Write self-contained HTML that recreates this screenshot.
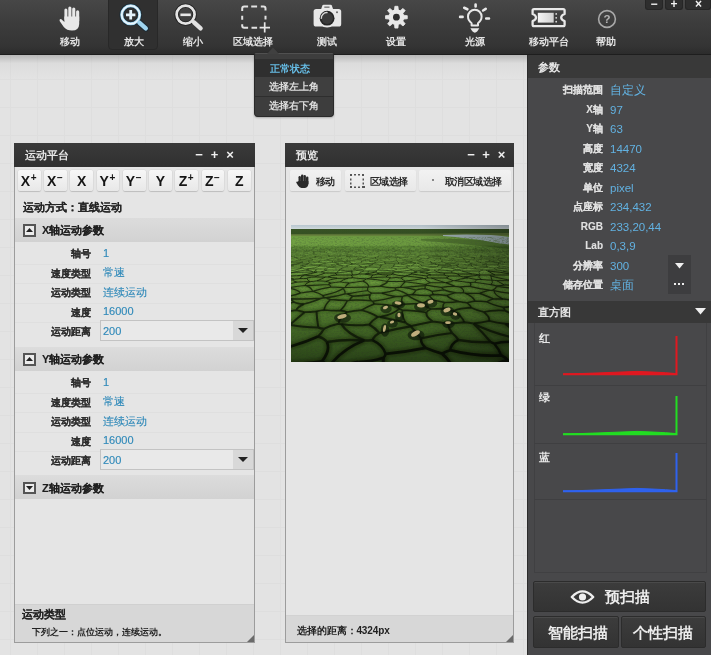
<!DOCTYPE html>
<html><head><meta charset="utf-8">
<style>
*{margin:0;padding:0;box-sizing:border-box}
html,body{width:711px;height:655px;overflow:hidden;background:#e2e2e2}
body{position:relative;font-family:"Liberation Sans",sans-serif;will-change:transform}
.a{position:absolute}
#bg{left:0;top:55px;width:528px;height:600px;background-color:#e3e3e3;
background-image:linear-gradient(#dedede 1px,transparent 1px),linear-gradient(90deg,#dedede 1px,transparent 1px);
background-size:27px 28px;background-position:10px 24px}
#bgshade{left:0;top:55px;width:528px;height:24px;background:linear-gradient(rgba(150,150,150,.55),rgba(200,200,200,.25) 35%,rgba(226,226,226,0))}
#tb{left:0;top:0;width:711px;height:55px;background:linear-gradient(#474747,#3d3d3d 40%,#343434 85%,#2c2c2c);border-bottom:1px solid #1e1e1e}
.lbl{position:absolute;top:35.6px;font-size:10px;line-height:12px;color:#e4e4e4;font-weight:bold;white-space:nowrap;transform:translateX(-50%)}
#act{left:108px;top:-1px;width:50px;height:51px;background:#303030;border:1px solid #282828;border-radius:0 0 4px 4px}
#wc{left:644px;top:0;width:67px;height:10px}
.wcb{position:absolute;top:0;height:10px;background:#2e2e2e;border:1px solid #262626;border-top:none;border-radius:0 0 3px 3px;color:#f2f2f2;font-size:12px;line-height:8px;text-align:center;font-weight:bold}
.mi{font-size:10px;line-height:12px;color:#dedede;white-space:nowrap;font-weight:bold}

#lp .ph,#pp .ph{font-size:11px;line-height:13px;color:#e6e6e6;white-space:nowrap;font-weight:bold}
.pc{font-size:13px;line-height:14px;color:#f0f0f0;font-weight:bold;width:12px;text-align:center}
.mb{position:absolute;top:27px;width:22.8px;height:21px;background:linear-gradient(#f7f7f7,#e8e8e8);border-radius:2px;box-shadow:0 1px 1px rgba(0,0,0,.15),0 0 0 0.5px rgba(0,0,0,.06);font-size:14px;font-weight:bold;line-height:22px;color:#161616;text-align:center}
.mb sup{font-size:10px;line-height:0;vertical-align:5.5px;margin-left:0.5px}
.tx{font-size:11px;line-height:13px;color:#252525;white-space:nowrap;font-weight:bold;-webkit-text-stroke:0.1px #252525}
.sh{left:0;width:239px;height:24px;background:linear-gradient(#dcdcdc,#d2d2d2)}
.sh .tg{position:absolute;left:7.5px;top:6.5px;width:13.5px;height:12.5px;border:2px solid #555;background:#ececec;display:flex;align-items:center;justify-content:center}
.sh span{position:absolute;left:27px;top:5.5px;font-size:11px;line-height:14px;color:#1e1e1e;white-space:nowrap;font-weight:bold;-webkit-text-stroke:0.1px #1e1e1e}
.rl{position:absolute;right:163px;font-size:10px;line-height:12px;color:#2e2e2e;white-space:nowrap;font-weight:bold;-webkit-text-stroke:0.15px #2e2e2e}
.rv{position:absolute;left:88px;font-size:11px;line-height:14px;color:#2f89b9;white-space:nowrap;margin-top:-1.5px;-webkit-text-stroke:0.15px #2f89b9}
.sep{position:absolute;left:0;width:239px;height:1px;background:#dfdfdf}
.inp{position:absolute;left:85px;width:154px;height:21px;margin-top:-1px;background:#e9e9e9;border:1px solid #c3c3c3}
.inp span{position:absolute;left:2px;top:2.5px;font-size:11px;line-height:14px;color:#2f89b9;-webkit-text-stroke:0.15px #2f89b9}
.inp .dd{position:absolute;right:0;top:0;width:20px;height:19px;background:#d8d8d8;display:flex;align-items:center;justify-content:center}

#pp .ph{font-size:11px;line-height:13px;color:#e6e6e6;white-space:nowrap}
.pb{top:27px;height:21px;background:linear-gradient(#f2f2f2,#e8e8e8);border-radius:2px;box-shadow:0 1px 1px rgba(0,0,0,.12)}
.pb span{position:absolute;top:5px;font-size:10px;letter-spacing:-0.6px;line-height:13px;color:#2a2a2a;white-space:nowrap;font-weight:bold}

.shd{font-size:11px;line-height:13px;color:#e8e8e8;white-space:nowrap;font-weight:bold}
.sl{position:absolute;right:108px;font-size:10px;line-height:12px;color:#e0e0e0;white-space:nowrap;font-weight:bold;-webkit-text-stroke:0.1px #e0e0e0}
.sv{position:absolute;left:82px;font-size:11.5px;line-height:14px;color:#62b2e2;white-space:nowrap}
.hl{font-size:11px;line-height:12px;color:#e8e8e8;font-weight:bold}
.bb{background:linear-gradient(#3c3c3c,#333);border:1px solid #2c2c2c;border-radius:2px;box-shadow:inset 0 1px 0 #4a4a4a}
.bb span{position:absolute;line-height:16px;color:#ececec;white-space:nowrap;font-weight:bold}
</style></head><body>
<div id="bg" class="a"></div>
<div id="bgshade" class="a"></div>

<!-- toolbar -->
<div id="tb" class="a">
  <div id="act" class="a"></div>
  <div class="lbl" style="left:70px">移动</div>
  <div class="lbl" style="left:134px">放大</div>
  <div class="lbl" style="left:193px">缩小</div>
  <div class="lbl" style="left:252.5px">区域选择</div>
  <div class="lbl" style="left:327px">测试</div>
  <div class="lbl" style="left:396px">设置</div>
  <div class="lbl" style="left:475px">光源</div>
  <div class="lbl" style="left:548.5px">移动平台</div>
  <div class="lbl" style="left:606px">帮助</div>
  <div id="wc" class="a">
    <div class="wcb" style="left:1px;width:18px">−</div>
    <div class="wcb" style="left:21px;width:18px">+</div>
    <div class="wcb" style="left:41px;width:26px;padding-left:1px">×</div>
  </div>
</div>
<svg class="a" style="left:0;top:0" width="711" height="55" viewBox="0 0 711 55">
<defs><linearGradient id="tkg" x1="0" y1="0" x2="1" y2="0"><stop offset="0" stop-color="#f4f4f4"/><stop offset="1" stop-color="#d0d0d0"/></linearGradient></defs>
<g fill="#e8e8e8">
<rect x="64.4" y="8.6" width="3" height="12" rx="1.5"/>
<rect x="68.3" y="6.4" width="3.1" height="14" rx="1.55"/>
<rect x="72.2" y="7.4" width="3.1" height="14" rx="1.55"/>
<rect x="76.1" y="10.3" width="3.1" height="12" rx="1.55"/>
<path d="M64.4 16.5 H79.2 V24 Q79 30.6 72 30.6 Q66.8 30.6 63.8 27 L59.6 21 Q59.2 18.6 61.4 19.2 L64.4 22 Z"/>
</g>
<g fill="none" stroke-linecap="round">
<circle cx="130.7" cy="14.8" r="9" stroke="#1c2a33" stroke-width="4.6"/>
<path d="M139.3 22.6 L145.8 28.4" stroke="#1c2a33" stroke-width="6.4"/>
<circle cx="130.7" cy="14.8" r="9" stroke="#a9d9f2" stroke-width="3"/>
<circle cx="130.7" cy="14.8" r="9" stroke="#eef7fc" stroke-width="1.5"/>
<path d="M126 14.8 H135.4 M130.7 10.1 V19.5" stroke="#e4f2fa" stroke-width="2.8" stroke-linecap="butt"/>
<path d="M139.3 22.6 L145.8 28.4" stroke="#9fd4ef" stroke-width="4.4"/>
<circle cx="185.6" cy="14.6" r="9" stroke="#222" stroke-width="4.4"/>
<circle cx="185.6" cy="14.6" r="9" stroke="#e4e4e4" stroke-width="2.7"/>
<path d="M180.4 14.8 H190.8" stroke="#e6e6e6" stroke-width="2.6" stroke-linecap="butt"/>
<path d="M194 22.3 L200.6 28.3" stroke="#e2e2e2" stroke-width="4.4"/>
<path d="M242.2 11 V8.5 Q242.2 6.5 244.2 6.5 H248.1 M251.2 6.5 H257.1 M260.8 6.5 H263.5 Q265.5 6.5 265.5 8.5 V10.4 M242.2 15.8 V19.7 M265.5 15.8 V19.4 M242.2 24.2 V25.8 Q242.2 27.8 244.2 27.8 H248.1 M251.5 27.8 H257.1" stroke="#e2e2e2" stroke-width="2" stroke-linecap="butt"/>
<path d="M259.6 27.6 H270 M264.7 22.2 V32.6" stroke="#e6e6e6" stroke-width="1.7" stroke-linecap="butt"/>
</g>
<g>
<path d="M320.9 9.8 L322.4 5.4 Q322.7 4.8 323.6 4.8 H330.6 Q331.5 4.8 331.8 5.4 L333.3 9.8 Z" fill="#e8e8e8"/>
<rect x="324.3" y="6.6" width="5.2" height="1.1" fill="#555"/>
<rect x="313.6" y="9" width="27.6" height="17.6" rx="2.6" fill="#e8e8e8"/>
<circle cx="327.1" cy="18.2" r="9.4" fill="#e8e8e8"/>
<circle cx="327.1" cy="18.2" r="7.4" fill="#252525"/>
<circle cx="327.1" cy="18.2" r="5.8" fill="#3a3a3a"/>
<path d="M321.3 18.8 A5.6 5.6 0 0 1 327.6 12.6" stroke="#d8d8d8" stroke-width="1.4" fill="none"/>
<circle cx="337" cy="12.2" r="1" fill="#666"/>
</g>
<g transform="translate(396.4 17.2)" fill="#e8e8e8"><path d="M-1.92 -7.15 L-1.53 -10.89 L1.53 -10.89 L1.92 -7.15 L3.70 -6.41 L6.62 -8.78 L8.78 -6.62 L6.41 -3.70 L7.15 -1.92 L10.89 -1.53 L10.89 1.53 L7.15 1.92 L6.41 3.70 L8.78 6.62 L6.62 8.78 L3.70 6.41 L1.92 7.15 L1.53 10.89 L-1.53 10.89 L-1.92 7.15 L-3.70 6.41 L-6.62 8.78 L-8.78 6.62 L-6.41 3.70 L-7.15 1.92 L-10.89 1.53 L-10.89 -1.53 L-7.15 -1.92 L-6.41 -3.70 L-8.78 -6.62 L-6.62 -8.78 L-3.70 -6.41 Z" stroke="#e8e8e8" stroke-width="0.8" stroke-linejoin="round"/><circle r="7.6"/><circle r="3.4" fill="#2e2e2e"/></g>
<g fill="none" stroke="#e8e8e8" stroke-linecap="round">
<path d="M471.6 25.4 V23.2 Q468 20.6 468 16.6 A6.8 6.8 0 0 1 481.6 16.6 Q481.6 20.6 478 23.2 V25.4 Z" stroke-width="2" stroke-linejoin="round"/>
<path d="M475.6 4.6 V6.5 M464.2 7.8 L467.4 9.3 M483.1 10.5 L485.7 8.8 M460.1 16.9 H462.6 M486.2 18.5 H489" stroke-width="2.6"/>
</g>
<path d="M470.4 28.2 H479.3 Q477.2 32.4 474.85 32.7 Q472.5 32.4 470.4 28.2 Z" fill="#e8e8e8"/>
<g>
<path d="M532.6 10.6 Q532.6 9.2 534 9.2 H563.2 Q564.6 9.2 564.6 10.6 V14 Q561.2 15.2 561.2 17.6 Q561.2 20 564.6 21.2 V24.8 Q564.6 26.2 563.2 26.2 H534 Q532.6 26.2 532.6 24.8 V21.2 Q536 20 536 17.6 Q536 15.2 532.6 14 Z" fill="none" stroke="#e8e8e8" stroke-width="2.3" stroke-linejoin="round"/>
<rect x="537.8" y="12.8" width="15.9" height="9.8" fill="url(#tkg)"/>
<circle cx="556.2" cy="13.9" r="0.9" fill="#ddd"/><circle cx="556.2" cy="17.8" r="0.9" fill="#ddd"/><circle cx="556.2" cy="21.7" r="0.9" fill="#ddd"/>
</g>
<circle cx="607" cy="19" r="8.4" fill="none" stroke="#a8a8a8" stroke-width="1.6"/>
<text x="607" y="23.2" font-size="11.5" font-weight="bold" fill="#b4b4b4" text-anchor="middle" font-family="Liberation Sans">?</text>
</svg>
<div class="a" style="left:254px;top:53px;width:80px;height:64px;background:#3d3d3d;border:1px solid #2a2a2a;border-top:1px solid #505050;border-radius:2px 2px 4px 4px;box-shadow:0 1px 2px rgba(0,0,0,.25)"></div>
<svg class="a" style="left:264px;top:46px" width="18" height="8"><path d="M3 8 L9 1.5 L15 8 Z" fill="#404040"/></svg>
<div class="a" style="left:255px;top:59px;width:78px;height:18px;background:#2f2f2f"></div>
<div class="a" style="left:255px;top:77px;width:78px;height:19px;background:#3f3f3f"></div>
<div class="a" style="left:255px;top:96px;width:78px;height:1px;background:#2e2e2e"></div>
<div class="a mi" style="left:270px;top:62.5px;color:#66bde6">正常状态</div>
<div class="a mi" style="left:269px;top:81px">选择左上角</div>
<div class="a mi" style="left:269px;top:100px">选择右下角</div>

<div class="a" id="lp" style="left:14px;top:143px;width:241px;height:500px;background:#e5e5e5;border:1px solid #9c9c9c;border-top:none">
<div class="a" style="left:-1px;top:0;width:241px;height:24px;background:linear-gradient(#3a3a3a,#303030)"></div>
<div class="a ph" style="left:10px;top:6px">运动平台</div>
<div class="a pc" style="left:178px;top:5px">−</div><div class="a pc" style="left:193.5px;top:5px">+</div><div class="a pc" style="left:209px;top:5px">×</div>
<div class="mb" style="left:2.80px"><span style="margin-left:-1px">X</span><sup>+</sup></div><div class="mb" style="left:29.05px"><span style="margin-left:-1px">X</span><sup>−</sup></div><div class="mb" style="left:55.30px">X</div><div class="mb" style="left:81.55px"><span style="margin-left:-1px">Y</span><sup>+</sup></div><div class="mb" style="left:107.80px"><span style="margin-left:-1px">Y</span><sup>−</sup></div><div class="mb" style="left:134.05px">Y</div><div class="mb" style="left:160.30px"><span style="margin-left:-1px">Z</span><sup>+</sup></div><div class="mb" style="left:186.55px"><span style="margin-left:-1px">Z</span><sup>−</sup></div><div class="mb" style="left:212.80px">Z</div>
<div class="a tx" style="left:8px;top:58px">运动方式：直线运动</div>
<div class="a sh" style="top:74.5px"><div class="tg"><svg width="9" height="6"><path d="M1 5 L4.5 1 L8 5 Z" fill="#222"/></svg></div><span>X轴运动参数</span></div>
<div class="rl" style="top:105.0px">轴号</div><div class="rv" style="top:104.0px">1</div><div class="sep" style="top:120.5px"></div><div class="rl" style="top:124.5px">速度类型</div><div class="rv" style="top:123.5px">常速</div><div class="sep" style="top:140.0px"></div><div class="rl" style="top:144.0px">运动类型</div><div class="rv" style="top:143.0px">连续运动</div><div class="sep" style="top:159.5px"></div><div class="rl" style="top:163.5px">速度</div><div class="rv" style="top:162.5px">16000</div><div class="sep" style="top:179.0px"></div><div class="rl" style="top:183.0px">运动距离</div><div class="inp" style="top:178px"><span>200</span><div class="dd"><svg width="10" height="6"><path d="M0 0 H10 L5 5 Z" fill="#222"/></svg></div></div>
<div class="a sh" style="top:203.5px"><div class="tg"><svg width="9" height="6"><path d="M1 5 L4.5 1 L8 5 Z" fill="#222"/></svg></div><span>Y轴运动参数</span></div>
<div class="rl" style="top:234.0px">轴号</div><div class="rv" style="top:233.0px">1</div><div class="sep" style="top:249.5px"></div><div class="rl" style="top:253.5px">速度类型</div><div class="rv" style="top:252.5px">常速</div><div class="sep" style="top:269.0px"></div><div class="rl" style="top:273.0px">运动类型</div><div class="rv" style="top:272.0px">连续运动</div><div class="sep" style="top:288.5px"></div><div class="rl" style="top:292.5px">速度</div><div class="rv" style="top:291.5px">16000</div><div class="sep" style="top:308.0px"></div><div class="rl" style="top:312.0px">运动距离</div><div class="inp" style="top:307px"><span>200</span><div class="dd"><svg width="10" height="6"><path d="M0 0 H10 L5 5 Z" fill="#222"/></svg></div></div>
<div class="a sh" style="top:332px"><div class="tg"><svg width="9" height="6"><path d="M1 1 L4.5 5 L8 1 Z" fill="#222"/></svg></div><span>Z轴运动参数</span></div>
<div class="a" style="left:0;top:461px;width:239px;height:38px;background:#d7d7d7;border-top:1px solid #d0d0d0"></div>
<div class="a tx" style="left:7px;top:465px">运动类型</div>
<div class="a" style="left:17px;top:483px;font-size:9px;line-height:12px;color:#222;white-space:nowrap;font-weight:bold">下列之一：点位运动，连续运动。</div>
<svg class="a" style="left:232px;top:492px" width="8" height="8"><path d="M7 0 V7 H0 Z" fill="#6a6a6a"/></svg>
</div>
<div class="a" id="pp" style="left:285px;top:143px;width:229px;height:500px;background:#e5e5e5;border:1px solid #9c9c9c;border-top:none">
<div class="a" style="left:-1px;top:0;width:229px;height:24px;background:linear-gradient(#3a3a3a,#303030)"></div>
<div class="a ph" style="left:10px;top:6px">预览</div>
<div class="a pc" style="left:179px;top:5px">−</div><div class="a pc" style="left:194px;top:5px">+</div><div class="a pc" style="left:209.5px;top:5px">×</div>
<div class="a pb" style="left:4px;width:51px">
 <svg class="a" style="left:6px;top:4px" width="14" height="14" viewBox="0 0 14 14"><g fill="#2a2a2a"><rect x="2.5" y="2" width="2.4" height="8" rx="1.2"/><rect x="5" y="0.5" width="2.4" height="9" rx="1.2"/><rect x="7.5" y="1" width="2.4" height="9" rx="1.2"/><rect x="10" y="2.5" width="2.4" height="8" rx="1.2"/><path d="M2.5 7 H12.4 V10 Q12 13.5 9 14 H5.5 Q3.5 13.5 2 11.5 L0.2 8.5 Q0.5 7 2 7.8 Z"/></g></svg>
 <span style="left:26px">移动</span></div>
<div class="a pb" style="left:59px;width:71px">
 <svg class="a" style="left:5px;top:4px" width="15" height="14" viewBox="0 0 15 14"><g fill="#555"><rect x="0" y="0" width="2" height="2"/><rect x="4" y="0" width="2" height="1.5"/><rect x="8" y="0" width="2" height="1.5"/><rect x="12" y="0" width="2" height="2"/><rect x="0" y="4.5" width="1.5" height="2"/><rect x="0" y="8.5" width="1.5" height="2"/><rect x="12.5" y="4.5" width="1.5" height="2"/><rect x="12.5" y="8.5" width="1.5" height="2"/><rect x="0" y="12" width="2" height="2"/><rect x="4" y="12.5" width="2" height="1.5"/><rect x="8" y="12.5" width="2" height="1.5"/><rect x="12" y="12" width="3" height="2"/></g></svg>
 <span style="left:25px">区域选择</span></div>
<div class="a pb" style="left:133px;width:92px">
 <div class="a" style="left:13px;top:9px;width:2px;height:2px;background:#888"></div>
 <span style="left:26px">取消区域选择</span></div>
<!--IMGSTART--><svg class="a" style="left:5px;top:82px" width="218" height="137" viewBox="0 0 218 137">
<defs>
<linearGradient id="fld" x1="0" y1="0" x2="0" y2="1">
<stop offset="0" stop-color="#c8d8e2"/><stop offset="0.028" stop-color="#e2ecef"/>
<stop offset="0.032" stop-color="#3c5a28"/><stop offset="0.07" stop-color="#3a5826"/>
<stop offset="0.085" stop-color="#7aae48"/><stop offset="0.35" stop-color="#7cb046"/>
<stop offset="0.6" stop-color="#6ea63c"/><stop offset="1" stop-color="#5a9432"/>
</linearGradient>
<linearGradient id="shd" x1="0" y1="0" x2="1" y2="0">
<stop offset="0" stop-color="#000" stop-opacity="0.08"/><stop offset="0.6" stop-color="#000" stop-opacity="0.12"/><stop offset="1" stop-color="#000" stop-opacity="0.35"/>
</linearGradient>
<linearGradient id="shv" x1="0" y1="0" x2="0" y2="1">
<stop offset="0" stop-color="#000" stop-opacity="0"/><stop offset="0.4" stop-color="#000" stop-opacity="0"/><stop offset="1" stop-color="#000" stop-opacity="0.5"/>
</linearGradient>
<filter id="tx" x="0" y="0" width="100%" height="100%"><feTurbulence type="fractalNoise" baseFrequency="0.45 0.8" numOctaves="2" seed="5"/><feColorMatrix values="0 0 0 0 0.1  0 0 0 0 0.2  0 0 0 0 0.05  0 0 0 -2.4 1.4"/></filter>
<filter id="bl" x="-50%" y="-50%" width="200%" height="200%"><feGaussianBlur stdDeviation="1.2"/></filter>
</defs>
<rect width="218" height="137" fill="url(#fld)"/>
<path d="M0 9 Q60 8.6 120 8.8 L218 8 V11 Q150 10.5 100 11 Q40 11.5 0 11 Z" fill="#8aa050" opacity=".5"/>
<path d="M130 14 Q170 13 218 17 V24 Q175 19 130 15.5 Z" fill="#2f4a1c" opacity=".4"/>
<path d="M152 10 Q175 8.8 200 10 Q212 11 218 12 V19.5 Q210 18.8 198 16.5 Q178 13 152 11 Z" fill="#b4c8cc"/>
<rect y="12" width="218" height="125" filter="url(#tx)" opacity="0.6"/>
<g filter="url(#bl)"><path d="M-3 49Q-3 49 -2 48M-3 49Q-16 51 -30 51M-2 48Q-9 48 -18 48M-25 53Q-14 52 -4 50M-4 50Q-3 49 -3 49M-6.6 59.6Q1.0 58.6 5.8 57.1M14.0 60.5Q14.0 58.6 18.8 56.7M5.8 57.1Q12.7 56.6 18.8 56.7M-2 48Q-2 48 -2 48M-2 48Q-1 48 -1 48M-1.6 51.2Q-11.5 53.4 -15.0 56.0M-2 51Q-3 53 3 54M3.2 54.3Q2.3 54.6 1.4 54.8M1.4 54.8Q-6.3 55.2 -14.0 56.4M5.8 57.1Q2.0 56.1 1.4 54.8M-1 51Q-3 50 -3 50M-1 51Q-1 51 -2 51M-3 50Q-16 52 -22 55M-4 50Q-4 50 -3 50M26.0 55.9Q30.6 53.9 34.4 52.1M26.0 55.9Q30.9 55.9 35.0 56.3M34 52Q36 52 37 52M37 52Q41 53 46 53M35.0 56.3Q38.7 54.5 46.0 53.4M37 52Q40 50 46 50M61 53Q59 53 57 53M61 53Q62 51 60 50M46.0 53.4Q51.6 53.2 57.1 53.2M46 50Q53 50 60 50M9.2 53.6Q12.5 53.7 16.2 53.4M9 54Q9 52 13 50M16 53Q20 52 25 52M13 50Q13 50 13 50M13 50Q19 51 25 51M25 52Q25 52 25 51M18.8 56.7Q19.0 56.6 19.2 56.6M19.2 56.6Q15.8 55.2 16.2 53.4M3.2 54.3Q6.1 53.9 9.2 53.6M-1 51Q5 51 13 50M26.0 55.9Q22.7 56.4 19.2 56.6M34 52Q29 52 25 52M26 47Q19 49 13 50M34 48Q29 50 25 51M34 48Q38 48 44 48M44 48Q45 49 46 50M228 49Q223 48 221 49M35.0 56.3Q37.9 57.1 39.8 58.1M57.1 53.2Q51.2 54.8 49.3 56.9M39.8 58.1Q44.4 57.4 49.3 56.9M49.3 56.9Q52.9 57.7 58.1 58.0M58.1 58.0Q65.3 57.1 72.0 56.1M60.8 52.6Q67.0 53.6 75.3 53.9M72.0 56.1Q74.1 55.0 75.3 53.9M44 48Q45 48 46 48M60 50Q61 50 62 50M62 50Q60 48 61 46M219 49Q219 49 221 49M219 49Q210 47 197 46M62 50Q65 50 68 49M85 47Q80 48 75 49M68 49Q71 49 74 49M74 49Q75 49 75 49M161 48Q164 48 167 49M167 49Q175 49 181 49M96.3 56.4Q97.2 54.4 99.8 52.6M96.3 56.4Q87.4 54.5 75.9 53.8M80 53Q87 52 95 52M80.2 52.7Q78.0 53.3 75.9 53.8M95 52Q97 52 100 53M110.2 52.6Q110.0 54.3 114.2 56.0M110 53Q105 52 100 53M96.7 56.5Q96.5 56.5 96.3 56.4M96.7 56.5Q105.1 56.4 113.5 56.6M113.5 56.6Q114.0 56.3 114.2 56.0M75.3 53.9Q75.6 53.9 75.9 53.8M82 50Q78 50 74 49M82 50Q80 51 80 53M101 48Q103 49 102 49M101 48Q95 48 88 48M88 48Q88 49 86 49M86 49Q92 50 97 50M97 50Q100 50 102 49M82 50Q84 50 86 49M95 52Q96 51 97 50M110 53Q112 52 115 51M114.2 56.0Q124.5 55.1 131.8 53.5M115 51Q124 52 132 53M102 49Q107 51 115 51M115 51Q115 51 115 51M113.5 56.6Q113.7 56.7 114.0 56.8M115 51Q117 50 121 49M121 48Q120 49 121 49M121 48Q122 48 126 47M139.4 57.7Q134.3 55.6 134.0 53.5M139.4 57.7Q147.3 58.0 154.4 57.6M154.4 57.6Q146.0 55.3 140.4 53.0M134.0 53.5Q135.4 53.2 137.1 52.9M137 53Q139 53 140 53M131.8 53.5Q132.9 53.5 134.0 53.5M134.8 59.5Q124.3 58.0 114.0 56.8M134.8 59.5Q136.2 58.4 139.4 57.7M155.1 57.6Q160.3 56.9 162.1 55.6M155.1 57.6Q154.8 57.6 154.4 57.6M155.4 53.0Q158.8 54.2 162.1 55.6M155 53Q148 53 140 53M121 49Q128 50 136 51M136 51Q136 52 137 53M178.9 57.6Q171.4 56.6 164.1 55.7M164.1 55.7Q163.1 55.7 162.1 55.6M167 49Q167 50 169 51M169 51Q171 52 173 52M181 49Q184 49 188 50M173 52Q182 51 188 50M158 51Q163 51 169 51M158 51Q158 52 155 53M164.1 55.7Q168.7 53.8 176.9 52.8M173 52Q175 52 177 53M158 51Q155 51 153 50M136 51Q136 50 140 50M140 50Q146 50 153 50M161 48Q156 48 153 48M153 50Q154 49 153 48M178.9 57.6Q180.9 57.3 183.6 57.3M176.9 52.8Q180.9 53.8 185.7 54.6M185.7 54.6Q184.6 55.9 183.6 57.3M183.6 57.3Q191.7 58.4 199.9 59.7M219 49Q219 50 220 50M197 46Q200 48 204 50M204 50Q212 50 220 50M224 51Q222 51 221 51M220 50Q221 50 221 51M224.0 56.3Q222.9 56.1 221.6 55.9M213.4 60.0Q209.6 57.8 205.7 55.7M205.7 55.7Q212.7 55.4 221.6 55.9M221 51Q224 53 218 55M221.6 55.9Q220.1 55.2 217.7 54.6M129 47Q132 48 135 48M140 50Q137 49 135 48M153 48Q150 48 146 47M201.0 55.2Q196.0 55.1 190.8 54.5M201.0 55.2Q201.2 55.2 201.3 55.2M201 55Q200 53 200 51M191 55Q186 52 189 50M189 50Q194 50 199 50M189 50Q189 50 189 50M199 50Q199 51 200 51M185.7 54.6Q187.9 54.4 190.8 54.5M199.9 59.7Q202.2 57.5 201.0 55.2M205.7 55.7Q203.6 55.4 201.3 55.2M218 55Q207 53 200 51M188 50Q188 50 189 50M204 50Q201 50 199 50" stroke="#1a2a0e" stroke-width="2.60" stroke-opacity="0.28" fill="none"/>
<path d="M-1.5 62.6Q6.2 61.3 14.0 60.5M-1.5 62.6Q-2.0 62.8 -2.9 63.1M14.0 60.5Q14.7 60.5 15.2 60.6M9.5 68.0Q7.5 64.5 -2.9 63.1M9.5 68.0Q15.5 67.0 21.5 66.4M15.2 60.6Q21.0 62.9 21.5 66.4M31.8 70.6Q28.3 68.0 21.7 66.4M21.5 66.4Q21.6 66.4 21.7 66.4M-1.5 62.6Q-7.0 61.5 -6.6 59.6M-2.9 63.1Q-8.3 64.1 -13.8 65.3M15.2 60.6Q26.4 60.2 37.5 59.5M21.7 66.4Q29.8 63.8 39.6 62.2M37.5 59.5Q40.0 60.6 39.6 62.2M37.5 59.5Q38.1 58.8 39.8 58.1M52.3 63.6Q54.4 66.0 54.1 68.9M52.3 63.6Q52.1 63.1 53.2 62.6M53.2 62.6Q53.6 62.6 54.0 62.5M54.0 62.5Q65.8 62.1 77.4 62.2M56.5 68.9Q66.8 67.0 76.8 65.5M56.5 68.9Q55.2 69.0 54.1 68.9M76.8 65.5Q76.0 63.8 77.4 62.2M31.8 70.6Q46.3 67.5 52.3 63.6M39.6 62.2Q47.3 61.8 53.2 62.6M58.1 58.0Q55.4 60.1 54.0 62.5M79.4 69.7Q79.3 68.9 80.8 68.1M80.8 68.1Q77.8 66.9 76.8 65.5M77.4 62.2Q77.6 62.1 77.9 62.0M77.9 62.0Q77.7 58.7 72.0 56.1M80.8 68.1Q85.8 68.3 90.9 68.1M88.8 61.1Q83.4 61.5 77.9 62.0M88.8 61.1Q95.3 62.6 104.3 62.8M90.9 68.1Q99.4 66.9 105.1 64.9M104.3 62.8Q103.9 63.9 105.1 64.9M105.1 64.9Q113.2 66.9 117.0 70.0M88.8 61.1Q94.7 58.9 96.7 56.5M104.3 62.8Q106.9 62.5 109.2 62.1M109.2 62.1Q111.7 59.3 114.0 56.8M178.9 57.6Q180.7 59.6 178.9 61.4M155.1 57.6Q158.9 59.4 164.1 61.3M178.9 61.4Q173.1 61.3 168.5 61.9M164.1 61.3Q166.3 61.6 168.5 61.9M155.8 70.4Q160.4 69.0 164.6 67.7M174.3 68.1Q173.2 67.9 172.0 67.7M164.6 67.7Q168.7 68.0 172.0 67.7M188.7 68.3Q192.9 66.5 198.6 65.2M211.8 74.1Q203.1 69.4 203.0 65.7M198.6 65.2Q200.0 65.3 201.3 65.4M201.3 65.4Q202.1 65.6 203.0 65.7M174.3 68.1Q182.0 68.6 188.7 68.3M178.9 61.4Q187.3 63.7 198.6 65.2M168.5 61.9Q174.0 64.8 172.0 67.7M121.3 69.6Q123.7 67.3 125.1 65.1M109.2 62.1Q110.7 62.2 112.2 62.3M125.1 65.1Q119.7 63.3 112.2 62.3M205.7 61.4Q219.8 62.9 233.6 65.8M205.7 61.4Q205.1 63.5 201.3 65.4M220.6 68.4Q223.3 68.6 224.9 68.3M220.6 68.4Q211.1 67.7 203.0 65.7M232.0 61.1Q221.9 59.9 213.4 60.0M205.2 60.9Q210.8 60.8 213.4 60.0M205.2 60.9Q205.4 61.1 205.7 61.4M135.3 60.1Q134.8 60.4 134.0 60.7M135.3 60.1Q142.0 61.6 150.4 62.4M134.0 60.7Q134.7 62.2 133.6 63.7M150.4 62.4Q152.1 63.6 152.8 64.8M152.8 64.8Q147.3 65.7 141.2 66.3M141.2 66.3Q137.9 64.9 133.6 63.7M134.8 59.5Q135.1 59.8 135.3 60.1M112.2 62.3Q123.4 61.5 134.0 60.7M164.1 61.3Q155.9 61.2 150.4 62.4M125.1 65.1Q128.8 64.2 133.6 63.7M164.6 67.7Q157.3 66.6 152.8 64.8M142.5 69.6Q141.1 67.9 141.2 66.3M205.2 60.9Q202.7 60.2 199.9 59.7" stroke="#1a2a0e" stroke-width="3.25" stroke-opacity="0.28" fill="none"/>
<path d="M33.0 85.0Q34.1 79.4 39.5 74.5M39.5 74.5Q47.6 75.2 56.4 75.6M49.5 85.6Q54.5 80.2 56.4 75.6M12.8 79.1Q23.4 76.5 30.3 73.3M39.5 74.5Q36.9 73.7 35.4 72.8M30.3 73.3Q31.7 72.9 33.5 72.7M35.4 72.8Q34.4 72.7 33.5 72.7M12.8 79.1Q5.9 78.7 2.8 77.0M30.3 73.3Q12.7 74.6 -2.3 73.6M-2.3 73.6Q1.3 75.1 2.8 77.0M31.8 70.6Q32.0 71.7 33.5 72.7M9.5 68.0Q4.5 70.1 -3.9 71.6M-3.9 71.6Q-4.0 72.2 -5.7 73.0M-2.3 73.6Q-4.3 73.4 -5.7 73.0M2.8 77.0Q-6.3 80.0 -16.7 83.2M-3.9 71.6Q-7.3 70.5 -12.7 70.1M61.9 71.2Q70.9 70.7 79.4 69.7M61.9 71.2Q59.5 73.1 58.6 75.2M58.6 75.2Q70.0 74.7 80.4 75.7M79.4 69.7Q77.1 72.7 80.4 75.7M35.4 72.8Q46.2 71.4 54.1 68.9M61.9 71.2Q58.9 70.1 56.5 68.9M56.4 75.6Q57.6 75.5 58.6 75.2M81.8 76.3Q80.8 76.1 80.4 75.7M81.8 76.3Q94.8 74.4 104.8 71.6M90.9 68.1Q96.5 70.2 104.8 71.6M83.2 79.0Q82.8 77.6 81.8 76.3M111.7 71.4Q113.4 70.6 116.4 70.2M111.7 71.4Q108.3 71.5 104.8 71.6M116.4 70.2Q116.8 70.1 117.0 70.0M83.2 79.0Q95.7 78.9 106.0 81.5M111.7 71.4Q109.6 75.1 111.9 79.3M111.9 79.3Q110.1 80.8 106.0 81.5M138.1 70.5Q129.5 70.7 121.3 69.6M138.1 70.5Q140.1 72.8 142.4 75.2M116.4 70.2Q121.9 74.2 131.8 78.0M121.3 69.6Q119.3 69.9 117.0 70.0M142.4 75.2Q135.5 75.9 131.8 78.0M111.9 79.3Q121.1 78.5 130.8 79.1M131.8 78.0Q130.9 78.4 130.8 79.1M180.3 82.7Q179.0 80.1 175.9 77.7M167.8 76.5Q171.7 77.2 175.9 77.7M167.8 76.5Q161.7 77.6 153.6 77.5M153.6 77.5Q151.2 80.2 152.3 83.6M138.1 70.5Q140.2 70.1 142.5 69.6M155.8 70.4Q149.1 69.7 142.5 69.6M155.8 70.4Q158.5 73.6 167.8 76.5M142.4 75.2Q148.2 76.1 153.6 77.5M184.1 76.1Q182.5 71.9 174.3 68.1M184.1 76.1Q180.5 77.0 175.9 77.7M188.7 68.3Q195.3 71.0 202.7 73.9M202.7 73.9Q207.1 73.9 211.8 74.1M184.1 76.1Q189.9 76.4 195.8 76.8M195.8 76.8Q198.6 75.1 202.7 73.9M195.8 76.8Q202.1 79.9 212.2 82.3M211.8 74.1Q218.2 74.7 224.8 75.9M220.6 68.4Q228.5 71.5 229.6 74.5" stroke="#1a2a0e" stroke-width="3.90" stroke-opacity="0.28" fill="none"/>
<path d="M25.5 86.3Q19.4 87.1 13.6 87.2M33.0 85.0Q40.7 85.8 49.5 85.6M5.1 85.1Q10.0 85.9 13.6 87.2M5.1 85.1Q6.7 82.0 12.8 79.1M33.0 85.0Q29.2 85.4 25.5 86.3M5.1 85.1Q-1.5 86.4 -7.6 86.4M49.5 85.6Q53.8 85.9 56.2 87.2M83.2 79.0Q76.1 81.7 70.5 85.2M56.2 87.2Q63.1 85.6 70.5 85.2M180.3 82.7Q169.2 83.2 162.2 86.0M162.2 86.0Q156.5 85.3 152.3 83.6M192.7 87.0Q185.2 85.1 180.3 82.7M192.7 87.0Q198.8 91.5 198.2 95.9M173.3 97.2Q171.2 91.1 162.2 86.0M140.1 84.0Q134.1 81.7 130.8 79.1M140.1 84.0Q146.2 83.8 152.3 83.6M192.7 87.0Q200.7 84.8 213.9 85.6M230.7 91.6Q220.4 88.9 213.9 85.6M213.9 85.6Q213.9 84.0 212.2 82.3M212.2 82.3Q222.5 81.7 232.2 80.9M140.1 84.0Q136.3 85.4 135.5 87.5M70.5 85.2Q80.3 87.7 86.8 92.0M89.3 91.9Q102.9 88.9 108.1 83.8M114.3 97.4Q110.6 90.8 111.4 85.1M108.1 83.8Q109.4 84.6 111.4 85.1M106.0 81.5Q107.1 82.6 108.1 83.8M135.5 87.5Q123.7 85.2 111.4 85.1" stroke="#1a2a0e" stroke-width="4.55" stroke-opacity="0.28" fill="none"/>
<path d="M27.3 102.4Q11.2 102.4 -1.0 99.9M27.3 102.4Q25.8 93.6 25.5 86.3M-1.0 99.9Q6.4 93.0 13.6 87.2M-4.2 100.7Q-15.8 102.9 -25.9 102.8M-1.0 99.9Q-2.7 100.2 -4.2 100.7M32.7 103.8Q39.4 100.6 47.5 98.8M47.5 98.8Q49.1 98.8 50.4 99.1M47.5 98.8Q48.2 92.5 56.2 87.2M173.3 97.2Q177.8 97.7 182.4 98.5M198.2 95.9Q191.1 97.6 182.4 98.5M173.3 97.2Q165.3 98.0 157.2 98.8M182.4 98.5Q182.6 98.7 182.6 98.8M238.0 100.4Q226.4 99.9 214.4 98.8M198.2 95.9Q206.1 97.9 214.4 98.8M157.2 98.8Q149.6 97.2 141.9 96.5M135.5 87.5Q134.6 92.0 141.9 96.5M141.9 96.5Q131.3 98.6 120.3 101.0M119.9 101.4Q120.0 101.2 120.3 101.0M50.4 99.1Q63.3 101.4 78.2 99.5M78.2 99.5Q81.2 95.3 86.8 92.0M89.3 91.9Q101.4 94.6 114.3 97.4M120.3 101.0Q116.1 99.5 114.3 97.4M86.8 92.0Q88.0 91.8 89.3 91.9" stroke="#1a2a0e" stroke-width="5.20" stroke-opacity="0.28" fill="none"/>
<path d="M-4.2 100.7Q-16.7 112.3 -20.7 125.8M32.7 103.8Q31.3 107.5 27.0 111.5M32.7 103.8Q29.3 103.4 27.3 102.4M73.7 115.5Q55.7 108.5 50.4 99.1M167.4 114.9Q165.1 111.3 161.1 108.0M161.1 108.0Q145.0 109.7 130.1 113.4M157.2 98.8Q157.3 103.1 161.1 108.0M182.6 98.8Q191.2 107.0 199.7 117.0M223.7 113.1Q224.5 106.1 214.4 98.8M182.6 98.8Q199.1 107.2 223.7 113.1M130.1 113.4Q125.1 107.0 119.9 101.4M81.4 115.2Q83.1 111.1 88.3 108.0M119.9 101.4Q103.9 103.9 88.3 108.0M78.2 99.5Q84.4 103.2 88.3 108.0" stroke="#1a2a0e" stroke-width="5.85" stroke-opacity="0.28" fill="none"/>
<path d="M27.0 111.5Q33.3 113.3 35.8 116.9M35.8 116.9Q55.0 114.0 72.7 115.6M72.7 115.6Q73.2 115.6 73.7 115.5M73.7 115.5Q77.6 115.5 81.4 115.2M167.4 114.9Q184.3 117.7 199.7 117.0" stroke="#1a2a0e" stroke-width="6.50" stroke-opacity="0.28" fill="none"/>
<path d="M27.0 111.5Q6.8 120.9 -19.7 125.9M94.6 128.8Q92.0 120.2 81.4 115.2M134.8 122.9Q129.4 118.1 130.1 113.4M167.4 114.9Q160.0 118.6 159.2 125.2M210.2 130.3Q208.3 124.4 203.3 118.7M199.7 117.0Q201.4 117.9 203.3 118.7M203.3 118.7Q213.6 115.9 228.8 117.1" stroke="#1a2a0e" stroke-width="6.50" stroke-opacity="0.35" fill="none"/>
<path d="M35.8 116.9Q39.9 125.2 30.9 136.4M72.7 115.6Q52.5 123.9 40.2 138.7M67.2 137.0Q80.6 136.7 92.5 132.7M92.5 132.7Q94.6 130.9 94.6 128.8M94.6 128.8Q115.9 126.9 134.8 122.9M151.0 128.6Q142.4 126.0 134.8 122.9M216.6 135.2Q214.6 132.5 210.2 130.3M151.0 128.6Q154.8 126.6 159.2 125.2M159.2 125.2Q185.8 132.0 210.2 130.3" stroke="#1a2a0e" stroke-width="7.15" stroke-opacity="0.35" fill="none"/>
<path d="M-18.2 138.9Q5.1 140.1 30.9 136.4M30.9 136.4Q34.0 137.6 34.8 140.0M33.4 143.0Q34.4 141.5 34.8 140.0M34.8 140.0Q37.6 139.7 40.2 138.7M67.2 137.0Q53.3 140.6 40.2 138.7M97.4 150.3Q91.2 141.4 92.5 132.7M194.0 149.1Q200.5 138.7 216.6 135.2M216.6 135.2Q228.4 138.8 240.6 143.6M163.0 146.3Q160.3 136.5 151.0 128.6" stroke="#1a2a0e" stroke-width="7.80" stroke-opacity="0.35" fill="none"/>
<path d="M57.0 159.4Q66.6 147.7 67.2 137.0" stroke="#1a2a0e" stroke-width="8.45" stroke-opacity="0.35" fill="none"/>
</g>
<path d="M216 23Q217 23 216 23M216 23Q218 23 220 23M220 23Q221 23 223 23M223 23Q222 23 220 23M220 23Q218 23 216 23M16 23Q16 23 17 23M16 23Q15 23 14 23M14 23Q10 23 5 24M5 24Q4 24 4 24M8 23Q12 23 17 23M8 23Q8 23 7 23M7 23Q6 23 4 24M14 23Q12 24 13 24M5 24Q5 24 7 24M13 24Q12 24 9 24M9 24Q8 24 7 24M223 24Q216 24 209 24M223 24Q223 24 223 24M209 24Q212 24 217 25M223 24Q219 24 217 25M177 24Q180 24 184 24M177 24Q177 23 178 23M178 23Q181 23 184 23M184 24Q186 24 186 24M184 23Q185 23 186 24M184 24Q184 24 185 24M185 24Q190 24 195 24M195 24Q192 24 188 24M186 24Q187 24 188 24M81 21Q81 21 81 21M81 21Q79 21 78 21M77 21Q74 21 72 21M69 22Q70 22 71 22M69 22Q69 22 69 22M72 21Q70 21 69 22M81 21Q76 22 71 22M139 21Q139 21 140 22M139 21Q143 21 146 21M147 22Q147 21 146 21M147 22Q144 22 141 22M141 22Q141 22 140 22M146 21Q146 21 146 21M150 22Q149 22 149 22M150 22Q147 22 145 22M149 22Q148 22 147 22M145 22Q143 22 141 22M81 21Q83 21 87 21M226 24Q224 24 222 24M222 24Q222 24 223 24M226 22Q223 22 219 22M226 22Q223 22 222 22M221 22Q222 22 222 22M221 22Q220 22 219 22M219 22Q217 22 214 22M214 22Q215 22 216 22M216 22Q217 22 219 22M229 23Q227 23 222 22M230 23Q226 23 223 23M220 23Q219 23 221 22M213 22Q215 22 219 22M213 22Q214 22 214 23M214 23Q215 23 216 23M222 22Q221 22 219 22M222 22Q223 22 225 22M226 24Q223 23 220 23M220 21Q218 21 216 21M220 21Q220 21 220 21M16 23Q18 23 21 23M13 24Q18 24 22 24M21 23Q22 23 22 24M-6 21Q-6 22 -4 22M-9 22Q-7 22 -5 22M-4 22Q-4 22 -5 22M-1 22Q-4 22 -5 22M-1 22Q2 22 6 22M-4 22Q-1 21 3 21M3 21Q4 22 6 22M-6 24Q-4 24 -1 24M-1 24Q0 24 0 24M0 24Q-4 25 -8 25M-1 24Q0 24 2 24M2 24Q3 24 4 24M7 24Q6 24 5 24M0 24Q3 24 5 24M9 24Q11 24 12 24M22 24Q23 24 23 24M23 24Q23 24 22 24M22 24Q17 24 12 24M211 23Q208 23 206 23M211 23Q215 23 219 24M219 24Q213 24 207 24M206 23Q207 23 207 24M207 24Q207 24 207 24M216 23Q213 23 212 23M212 23Q211 23 211 23M222 24Q220 24 219 24M209 24Q208 24 207 24M208 24Q207 24 203 24M208 24Q213 25 217 25M207 24Q206 24 206 24M206 24Q204 24 203 24M168 25Q168 25 168 25M168 25Q163 25 158 25M137 22Q139 22 141 22M137 22Q136 22 134 22M145 22Q145 22 144 22M134 22Q134 22 134 22M134 22Q137 22 140 22M144 22Q143 22 141 22M177 24Q176 24 176 24M176 24Q173 24 171 24M178 23Q177 23 177 23M177 23Q172 23 168 23M171 24Q171 23 168 23M176 24Q178 24 178 24M178 24Q176 24 175 24M175 24Q171 24 167 24M171 24Q169 24 167 24M175 24Q176 24 175 25M166 24Q167 24 167 24M166 24Q166 24 168 25M167 24Q167 24 167 24M197 25Q191 24 185 24M185 24Q185 24 184 24M185 24Q185 24 184 24M196 24Q196 24 197 24M196 24Q196 24 197 25M197 24Q200 24 203 24M196 24Q195 24 195 24M185 24Q185 24 185 24M178 24Q181 24 184 24M166 24Q164 24 161 24M158 25Q158 24 158 24M161 24Q159 24 158 24M117 24Q119 24 120 24M117 24Q118 24 120 23M120 24Q123 24 126 24M127 24Q126 24 122 23M127 24Q127 24 126 24M120 23Q121 23 122 23M149 24Q148 25 148 25M134 24Q141 24 148 25M134 24Q134 25 135 25M197 24Q196 24 194 24M206 24Q201 23 196 23M196 23Q195 23 194 24M184 23Q186 23 187 23M188 24Q190 24 191 23M187 23Q189 23 191 23M191 23Q193 24 194 24M144 21Q144 21 146 21M146 21Q150 21 154 21M149 22Q152 22 154 22M156 22Q155 22 154 22M156 22Q156 21 156 21M154 21Q155 21 156 21M126 22Q125 22 125 22M126 22Q122 22 120 22M120 22Q117 22 115 22M115 22Q119 22 124 22M125 22Q124 22 124 22M127 22Q127 22 126 22M127 22Q131 22 134 22M134 22Q132 22 131 21M131 21Q130 21 130 21M130 21Q128 22 125 22M113 22Q113 22 114 21M113 22Q114 22 115 22M114 21Q118 21 122 21M122 21Q123 22 124 22M87 21Q88 21 90 21M90 21Q92 21 94 21M94 21Q94 21 94 21M222 22Q222 21 221 21M221 21Q221 21 220 21M216 21Q215 21 214 21M216 22Q214 21 212 21M212 21Q213 21 214 21M214 23Q211 22 209 23M212 23Q211 23 208 23M209 23Q209 23 208 23M213 22Q210 22 206 22M206 22Q205 22 203 22M209 23Q207 22 203 22M193 23Q197 23 201 23M193 23Q192 23 193 23M195 23Q194 23 193 23M195 23Q200 23 204 23M204 23Q203 23 201 23M196 23Q196 23 195 23M187 23Q187 23 187 23M187 23Q190 23 193 23M206 23Q205 23 204 23M203 23Q206 23 208 23M203 23Q201 23 201 23M21 23Q26 23 29 23M23 24Q26 24 29 24M29 24Q29 24 29 23M29 23Q30 23 29 23M38 23Q37 23 36 23M38 23Q36 23 33 24M33 24Q31 24 29 24M29 23Q32 23 36 23M45 23Q45 23 45 23M45 23Q41 23 38 23M45 23Q43 23 41 23M41 23Q38 23 34 23M34 23Q34 23 36 23M-7 21Q-5 21 -1 21M3 21Q3 21 3 21M3 21Q6 21 6 21M-1 22Q-1 22 -1 22M-1 22Q-2 22 -4 22M-4 22Q-7 22 -10 22M47 22Q47 22 47 22M47 22Q44 22 40 22M47 22Q42 22 37 22M40 22Q37 22 34 22M34 22Q34 22 35 22M37 22Q36 22 35 22M46 23Q48 22 48 22M46 23Q51 23 55 22M55 22Q55 22 54 22M54 22Q52 22 49 22M48 22Q49 22 49 22M45 23Q46 23 46 23M41 23Q42 23 41 22M41 22Q45 22 48 22M45 23Q45 23 45 23M58 23Q52 23 47 23M58 23Q57 23 55 22M45 23Q46 23 47 23M49 22Q53 22 56 22M49 22Q49 22 49 22M57 22Q58 22 59 22M57 22Q57 22 56 22M59 22Q59 22 59 22M59 22Q57 22 54 22M41 22Q41 22 40 22M49 22Q49 22 47 22M133 24Q135 24 136 24M133 24Q132 24 130 24M130 24Q129 24 129 23M129 23Q132 23 135 23M135 23Q137 24 136 24M144 24Q143 24 142 24M144 24Q148 24 151 24M151 24Q151 24 151 24M151 24Q150 24 147 24M147 24Q144 24 141 24M141 24Q142 24 142 24M149 24Q148 24 147 24M158 24Q153 24 151 24M133 24Q134 24 134 24M136 24Q139 24 141 24M135 23Q136 23 137 23M137 23Q138 24 142 24M137 23Q137 23 137 23M137 23Q139 23 141 23M144 24Q144 23 142 23M141 23Q141 23 142 23M133 23Q134 22 137 22M133 23Q136 23 139 23M141 22Q142 22 142 23M139 23Q140 23 142 23M167 24Q164 24 160 23M161 24Q158 24 156 24M160 23Q158 24 156 24M151 24Q152 24 152 24M152 24Q154 24 156 24M139 21Q138 21 136 21M131 21Q132 21 133 21M133 21Q135 21 136 21M125 23Q124 23 124 23M125 23Q127 23 130 23M132 23Q130 23 128 23M132 23Q132 23 131 23M128 23Q126 23 124 23M131 23Q131 23 130 23M129 23Q128 23 128 23M137 23Q135 23 132 23M133 23Q132 23 131 23M141 23Q140 23 139 23M130 24Q129 24 127 24M122 23Q123 23 124 23M127 22Q130 22 130 23M120 22Q122 22 123 22M120 22Q116 22 114 22M123 22Q120 23 115 23M114 22Q114 23 115 23M115 23Q115 23 115 23M115 23Q115 23 115 23M120 22Q120 22 120 22M125 23Q123 23 123 22M113 22Q112 22 111 22M111 22Q110 22 111 22M111 22Q113 22 114 22M120 23Q117 23 115 23M111 22Q109 22 107 22M107 22Q107 22 107 22M107 22Q110 23 115 23M126 24Q126 24 126 24M3 21Q8 21 14 21M8 22Q10 21 13 21M8 22Q7 22 6 22M13 21Q13 21 14 21M15 21Q14 21 14 21M58 21Q58 21 59 21M58 21Q54 22 49 22M59 21Q58 21 58 21M58 21Q54 21 51 21M51 21Q49 21 47 22M49 22Q48 22 47 22M47 22Q47 22 47 22M69 22Q68 22 67 22M69 22Q66 21 64 21M57 22Q58 22 58 21M64 21Q61 21 59 21M67 22Q63 22 59 22M56 22Q53 22 49 22M65 21Q64 21 64 21M47 22Q47 22 47 22M37 22Q40 22 41 21M41 21Q44 22 47 22M74 22Q76 22 78 22M74 22Q73 22 73 22M73 22Q73 22 75 23M78 22Q79 22 80 22M80 22Q80 22 79 22M79 22Q77 23 75 23M81 21Q81 22 82 22M82 22Q80 22 78 22M71 22Q72 22 74 22M177 23Q177 23 176 23M169 23Q169 23 168 23M169 23Q170 23 172 23M168 23Q168 23 168 23M172 23Q174 23 176 23M187 23Q185 23 182 23M182 23Q180 23 179 23M176 23Q177 23 179 23M168 22Q169 22 172 22M168 22Q170 23 172 23M179 23Q178 23 177 22M172 22Q174 22 177 22M163 21Q164 21 166 21M163 21Q161 21 159 21M159 21Q159 21 160 21M160 21Q162 21 164 21M165 21Q166 21 166 21M162 22Q159 22 156 22M162 22Q163 22 164 22M164 22Q164 22 163 21M156 21Q157 21 159 21M107 22Q105 22 102 22M107 22Q106 23 106 23M106 23Q104 23 101 23M102 22Q101 22 99 22M99 22Q99 22 98 23M98 23Q99 23 101 23M117 24Q114 24 111 24M111 24Q110 24 110 24M115 23Q113 23 111 23M110 24Q110 23 111 23M106 23Q106 23 108 23M111 23Q109 23 108 23M101 23Q103 23 103 23M108 23Q105 23 103 23M111 22Q108 22 105 22M102 22Q103 22 103 22M105 22Q104 22 103 22M94 22Q92 22 93 22M94 22Q91 22 88 22M87 22Q87 22 87 22M87 22Q87 22 88 22M87 22Q88 22 89 22M89 22Q91 22 92 22M92 22Q92 22 93 22M99 22Q96 22 93 22M103 22Q101 22 97 22M97 22Q95 22 94 22M90 21Q89 21 88 22M94 21Q96 21 97 21M97 21Q98 21 97 22M82 22Q85 22 87 22M80 22Q83 22 87 22M85 23Q82 23 79 22M85 23Q87 22 89 22M85 23Q86 23 86 23M86 23Q89 23 93 23M93 23Q93 22 92 22M93 23Q94 23 95 23M98 23Q97 23 95 23M220 21Q223 21 226 21M221 21Q225 21 229 21M203 21Q206 21 209 21M202 21Q204 21 204 21M209 21Q209 21 211 22M204 21Q206 22 209 22M211 22Q210 22 209 22M212 21Q210 21 209 21M214 22Q212 22 211 22M206 22Q206 22 206 22M206 22Q208 22 209 22M206 22Q201 22 197 21M203 22Q202 22 200 22M200 22Q198 22 197 21M196 21Q195 21 195 21M204 21Q200 21 196 21M195 21Q196 21 196 21M196 21Q196 21 197 21M-4 22Q-2 22 -2 23M-2 23Q-6 23 -9 23M34 23Q33 23 31 23M34 22Q34 22 33 22M33 22Q33 22 31 23M29 23Q29 23 30 23M30 23Q31 23 31 23M17 23Q17 23 17 23M17 23Q19 23 21 23M30 23Q26 23 21 23M54 24Q55 23 56 23M54 24Q50 24 46 24M56 23Q52 23 48 23M46 24Q48 23 48 23M45 23Q41 23 39 24M47 23Q48 23 48 23M46 24Q46 24 45 24M45 24Q43 24 39 24M55 24Q56 24 54 24M55 24Q55 24 54 24M54 24Q50 24 44 24M45 24Q46 24 44 24M33 24Q34 24 34 24M39 24Q36 24 34 24M144 22Q145 22 145 22M142 23Q145 23 148 23M145 22Q146 23 148 23M142 23Q145 23 148 23M152 24Q151 23 149 23M149 23Q148 23 148 23M148 23Q148 23 148 23M168 23Q165 23 163 23M160 23Q160 23 160 23M163 23Q161 23 160 23M149 23Q151 23 153 23M160 23Q156 23 153 23M145 22Q149 23 153 23M153 23Q153 23 153 23M111 24Q110 24 114 25M109 24Q109 24 110 24M109 24Q108 24 109 25M110 24Q110 24 110 24M120 24Q119 24 117 25M13 21Q15 21 18 21M23 21Q21 21 18 21M23 21Q25 21 27 21M72 21Q71 21 70 21M124 21Q124 21 125 21M124 21Q120 21 116 21M125 21Q125 21 125 21M122 21Q123 21 124 21M130 21Q127 21 125 21M114 21Q114 21 113 21M114 21Q114 21 113 21M114 21Q115 21 116 21M191 22Q187 23 183 23M191 22Q188 22 185 22M183 23Q181 22 180 22M180 22Q183 22 185 22M182 23Q182 23 183 23M177 22Q176 22 177 22M180 22Q178 22 177 22M105 21Q103 21 101 21M105 21Q106 21 107 21M105 21Q106 21 107 21M105 21Q104 21 102 21M102 21Q101 21 101 21M105 22Q105 22 105 21M97 21Q99 21 101 21M113 21Q110 21 107 21M191 22Q195 22 200 22M191 22Q194 22 192 22M192 22Q193 22 193 23M193 23Q197 22 200 22M200 22Q200 22 200 22M193 23Q193 23 193 23M191 22Q192 22 192 22M203 23Q202 22 200 22M200 22Q200 22 200 22M195 21Q195 21 195 21M191 22Q191 22 191 22M195 21Q193 22 191 22M195 21Q191 21 188 21M185 22Q184 22 185 22M185 22Q186 22 188 22M188 22Q189 22 191 22M-10 23Q-8 23 -5 23M-11 24Q-8 23 -5 23M-5 23Q-5 23 -5 23M-2 23Q0 23 3 22M3 23Q3 22 3 22M3 23Q1 23 -1 23M-1 23Q-3 23 -5 23M2 24Q-1 23 -5 23M7 23Q4 23 -1 23M22 23Q25 22 27 22M22 23Q20 22 18 22M18 22Q19 22 19 22M19 22Q22 22 24 22M24 22Q26 22 27 22M33 22Q30 22 27 22M21 23Q21 23 22 23M17 23Q16 23 15 23M15 23Q16 22 18 22M8 22Q9 22 8 22M18 21Q19 22 18 22M18 22Q18 22 17 22M17 22Q13 22 8 22M-1 22Q2 22 6 22M8 22Q7 22 6 22M3 22Q5 22 6 22M6 22Q6 22 6 22M54 24Q54 24 53 24M55 24Q56 24 56 24M54 24Q54 24 54 24M56 24Q59 24 62 25M40 24Q42 24 44 24M44 24Q44 24 44 24M44 24Q44 24 44 24M34 24Q34 24 34 24M34 24Q39 24 44 24M59 23Q57 23 56 23M59 23Q59 24 63 24M56 24Q60 24 63 24M63 24Q63 24 63 24M76 23Q76 23 75 24M76 23Q75 23 75 23M75 23Q72 23 69 23M69 23Q68 23 67 24M75 24Q74 24 74 24M67 24Q71 24 74 24M67 22Q67 22 66 22M59 22Q60 22 62 22M62 22Q64 22 66 22M73 22Q71 22 69 22M66 22Q67 22 69 22M60 23Q60 23 58 23M60 23Q61 23 62 23M62 23Q67 23 72 23M58 23Q59 23 60 23M60 23Q66 23 71 23M72 23Q72 23 71 23M58 23Q58 23 58 23M59 23Q59 23 60 23M69 23Q66 23 62 23M63 24Q65 24 67 24M75 23Q73 23 72 23M75 23Q75 23 75 23M62 22Q61 22 60 23M69 22Q70 22 71 23M75 23Q75 23 75 23M22 24Q22 24 23 24M34 24Q33 24 32 24M23 24Q28 24 32 24M40 24Q36 24 32 24M30 24Q31 24 32 24M32 24Q32 24 32 24M12 24Q12 25 12 25M162 23Q162 23 162 23M162 23Q161 22 162 22M162 23Q158 23 154 23M154 23Q154 22 155 22M162 22Q159 22 156 22M155 22Q156 22 156 22M169 23Q165 23 162 23M163 23Q162 23 162 23M162 22Q162 22 162 22M162 22Q165 22 168 22M153 23Q154 23 154 23M150 22Q153 22 155 22M162 22Q163 22 162 22M154 22Q156 22 156 22M27 21Q27 21 27 21M27 21Q30 21 32 21M177 22Q179 22 180 21M177 22Q174 22 172 22M170 22Q170 22 171 22M170 22Q175 22 177 21M177 21Q178 21 178 21M171 22Q171 22 172 22M180 21Q179 21 178 21M177 22Q177 22 177 22M185 22Q182 22 180 21M172 22Q172 22 172 22M164 22Q168 22 171 22M166 21Q169 21 170 22M166 21Q172 21 177 21M179 21Q178 21 178 21M179 21Q182 21 185 21M185 21Q186 21 186 21M178 21Q178 21 179 21M188 22Q186 21 185 21M188 21Q187 21 186 21M91 24Q89 24 87 24M87 24Q86 24 85 25M84 24Q86 24 87 24M84 24Q80 24 77 24M77 24Q77 25 77 25M91 23Q92 23 91 24M91 23Q88 23 86 23M86 23Q84 23 81 23M81 23Q82 23 84 24M91 24Q88 24 85 24M84 24Q84 24 85 24M85 24Q85 24 85 24M86 23Q85 23 86 23M95 23Q95 23 94 23M94 23Q93 23 91 23M76 23Q78 23 81 23M75 24Q79 24 84 24M91 24Q93 24 94 24M84 24Q84 24 85 24M91 24Q92 24 94 24M94 24Q94 24 94 24M101 24Q101 24 101 24M94 24Q98 24 101 24M109 24Q107 24 104 24M101 24Q102 24 104 24M103 23Q103 23 102 23M103 23Q100 23 98 23M98 23Q96 23 95 24M102 23Q102 24 101 24M101 24Q98 24 95 24M110 24Q106 24 102 23M103 23Q103 23 103 23M94 23Q96 23 98 23M94 24Q94 24 95 24M104 24Q102 24 101 24M12 22Q14 22 15 22M12 22Q12 22 10 23M15 22Q13 22 13 23M13 23Q12 23 12 23M12 23Q11 23 10 23M17 22Q16 22 15 22M6 22Q9 22 12 22M3 23Q7 22 10 23M15 23Q14 23 13 23M18 22Q18 22 19 22M19 22Q18 22 19 22M8 23Q10 23 12 23M64 24Q69 24 74 24M64 24Q66 24 68 25M69 25Q72 25 75 24M75 24Q75 24 75 24M75 24Q75 24 74 24M63 24Q64 24 64 24M74 24Q74 24 74 24M77 24Q76 24 75 24M85 24Q81 24 75 24M23 24Q22 24 21 25M27 21Q31 21 34 21M27 21Q26 22 23 22M26 22Q29 22 32 22M26 22Q24 22 23 22M32 22Q33 22 34 21M19 22Q21 22 23 22M27 21Q28 21 27 21M35 22Q34 22 32 22M24 22Q25 22 26 22M33 21Q35 21 36 21M36 21Q38 21 41 21M43 21Q41 21 41 21M34 21Q35 21 36 21M41 21Q41 21 41 21" stroke="#13200a" stroke-width="0.40" stroke-opacity="0.20" fill="none"/>
<path d="M211 26Q211 26 210 26M211 26Q213 26 217 26M206 25Q206 25 206 25M206 25Q204 25 205 25M206 25Q212 25 217 25M217 26Q217 26 217 25M205 25Q207 26 210 26M163 26Q164 26 164 26M163 26Q158 25 154 25M164 26Q165 25 165 25M154 25Q154 25 154 25M165 25Q160 25 158 25M154 25Q156 25 158 25M163 26Q161 26 158 26M154 25Q153 25 152 25M152 25Q156 26 158 26M152 25Q149 25 145 25M158 26Q157 26 157 26M157 26Q151 26 145 25M145 25Q145 25 145 25M217 25Q217 25 217 25M225 25Q222 25 219 25M219 25Q220 25 219 25M219 25Q224 25 230 26M208 24Q208 25 206 25M217 25Q218 25 219 25M217 25Q217 25 219 25M217 26Q220 26 222 26M230 26Q226 26 222 26M174 25Q178 25 180 25M174 25Q172 25 169 25M169 25Q170 25 168 25M180 25Q177 25 176 25M168 25Q172 25 175 25M176 25Q175 25 175 25M164 26Q166 26 169 26M169 26Q171 26 174 26M174 26Q173 26 174 25M165 25Q167 25 169 25M158 25Q158 25 158 25M190 25Q188 25 186 25M190 25Q195 25 198 25M197 25Q197 25 198 25M186 25Q186 25 185 24M198 25Q198 25 198 25M206 25Q202 25 198 25M181 25Q181 25 180 25M181 25Q182 25 183 25M183 25Q183 25 186 25M176 25Q181 25 185 24M199 25Q202 25 205 25M199 25Q199 25 198 25M197 26Q197 26 198 25M197 26Q194 26 190 25M198 25Q195 25 191 25M190 25Q191 25 191 25M199 25Q199 25 198 25M190 25Q191 25 191 25M183 25Q186 25 190 25M158 26Q158 26 158 26M158 26Q163 26 168 27M158 26Q157 27 158 27M168 27Q169 27 170 27M170 27Q167 27 163 27M163 27Q161 27 158 27M172 27Q171 26 169 26M172 27Q170 27 168 27M157 26Q158 26 158 26M149 24Q152 25 154 25M145 25Q144 25 143 25M148 25Q147 25 143 25M143 25Q139 25 136 25M135 25Q136 25 136 25M196 28Q196 28 196 28M196 28Q193 28 191 28M191 28Q189 28 187 27M187 27Q187 28 184 28M184 28Q190 28 196 28M181 25Q181 25 182 25M174 26Q176 26 179 26M182 25Q182 25 182 25M182 25Q181 26 179 26M178 27Q175 27 173 27M178 27Q181 27 185 27M185 27Q184 27 182 27M173 27Q176 27 179 27M182 27Q181 27 179 27M173 27Q172 27 172 27M179 27Q179 26 179 26M185 27Q186 27 187 27M191 28Q191 27 192 27M182 27Q185 27 187 27M192 27Q189 27 187 27M196 28Q198 28 202 28M202 28Q200 28 198 27M192 27Q195 27 198 27M223 31Q218 30 213 30M223 31Q223 31 224 31M206 27Q211 27 214 27M206 27Q207 27 210 27M214 27Q216 27 217 27M217 27Q213 27 210 27M210 27Q210 27 210 27M173 28Q171 28 171 28M173 28Q175 28 177 28M171 28Q174 28 176 29M177 28Q180 28 183 28M176 29Q180 29 184 29M183 28Q184 28 184 29M167 28Q170 28 171 28M167 28Q165 28 163 27M170 27Q171 27 173 28M178 27Q178 28 177 28M184 28Q184 28 183 28M156 26Q154 26 152 26M156 26Q150 26 144 26M152 26Q146 26 141 26M144 26Q142 26 141 26M158 26Q157 26 156 26M158 27Q157 27 156 27M147 27Q149 27 152 26M147 27Q147 27 147 27M147 27Q151 27 156 27M145 25Q144 26 144 26M147 27Q142 26 139 26M139 26Q140 26 141 26M141 26Q141 26 141 26M136 25Q137 25 141 26M167 28Q167 28 165 28M156 27Q156 27 156 28M165 28Q162 28 157 28M156 28Q156 28 157 28M128 25Q125 25 124 25M128 25Q129 25 130 25M130 25Q130 25 130 25M130 25Q129 25 126 24M126 24Q124 25 124 25M135 25Q133 25 130 25M147 27Q145 27 143 27M143 27Q141 27 139 26M139 26Q139 26 139 26M139 26Q139 26 139 26M130 25Q132 26 136 26M139 26Q138 26 136 26M143 27Q143 27 143 27M156 28Q154 28 152 28M143 27Q147 27 152 28M10 30Q13 30 15 31M5 24Q2 25 2 25M2 25Q-3 25 -8 25M199 27Q198 27 198 27M199 27Q198 26 199 26M198 27Q193 27 188 26M194 26Q192 26 188 26M194 26Q196 26 197 26M188 26Q188 26 188 26M197 26Q198 26 199 26M199 26Q199 26 199 26M202 28Q204 28 205 28M198 27Q199 27 198 27M205 28Q208 28 211 28M211 28Q210 28 210 27M210 27Q205 27 199 27M206 27Q203 26 199 26M187 27Q188 27 188 26M182 25Q187 26 194 26M182 25Q186 26 188 26M197 26Q197 26 197 26M210 26Q203 26 199 26M211 26Q212 26 212 26M212 26Q211 26 214 27M214 27Q214 27 214 27M157 28Q157 28 159 29M152 28Q149 28 147 29M147 29Q152 29 157 29M159 29Q158 29 157 29M178 30Q176 30 175 30M178 30Q179 31 176 31M171 30Q173 30 175 30M171 30Q169 30 168 30M198 29Q197 28 196 28M198 29Q196 29 196 29M184 29Q184 29 186 29M186 29Q191 29 196 29M216 29Q215 29 215 29M216 29Q216 29 217 30M215 29Q212 29 210 29M210 29Q209 29 209 29M217 30Q213 30 209 29M209 29Q209 29 209 29M217 29Q217 29 215 29M217 29Q216 28 213 28M205 28Q208 28 210 29M213 28Q212 28 211 28M198 29Q203 29 209 29M223 30Q220 30 217 30M223 30Q223 30 223 31M208 30Q210 30 213 30M208 30Q207 30 209 29M212 26Q217 26 223 27M214 27Q219 27 225 27M222 26Q222 26 224 26M223 27Q222 26 224 26M213 28Q216 28 220 28M217 27Q220 28 224 28M217 27Q217 27 217 27M220 28Q223 28 224 28M112 25Q116 26 119 25M112 25Q110 25 108 25M108 25Q108 25 108 25M108 25Q108 25 109 25M119 25Q118 25 117 25M109 25Q109 25 109 25M109 25Q112 25 114 25M114 25Q116 25 117 25M117 25Q117 25 117 25M103 26Q107 25 108 25M103 26Q104 26 106 26M106 26Q110 26 112 26M112 26Q111 26 112 25M128 25Q126 25 123 26M124 25Q121 25 117 25M123 26Q121 25 119 25M65 27Q69 27 72 27M65 27Q64 27 61 27M61 27Q64 28 66 28M66 28Q70 28 73 28M72 27Q72 27 73 28M65 27Q65 27 66 27M66 27Q68 26 71 26M72 27Q73 27 73 27M71 26Q71 27 73 27M62 26Q62 26 61 26M62 26Q64 26 66 27M61 26Q64 26 67 26M67 26Q69 26 72 26M71 26Q71 26 72 26M54 24Q58 25 58 25M53 24Q53 25 50 25M58 25Q54 25 50 25M58 25Q59 25 62 25M58 25Q58 25 58 25M40 24Q39 25 37 25M44 24Q43 25 45 25M37 25Q39 25 39 25M39 25Q42 25 44 25M44 25Q44 25 45 25M53 24Q48 25 45 25M50 25Q48 25 44 25M50 25Q50 25 50 25M34 25Q32 25 30 24M34 25Q36 25 37 25M8 25Q5 25 4 25M8 25Q6 26 4 26M-2 26Q1 26 4 26M-2 26Q0 25 3 25M3 25Q3 25 4 25M2 25Q3 25 3 25M-5 26Q-4 26 -2 26M12 25Q8 25 4 25M175 30Q175 30 175 30M175 30Q173 29 173 29M175 30Q168 29 163 29M173 29Q170 29 167 28M167 28Q165 29 163 29M176 29Q175 29 173 29M186 29Q187 29 186 30M186 30Q180 30 175 30M171 30Q165 30 158 29M175 30Q175 30 175 30M159 29Q161 29 163 29M158 29Q158 29 157 29M165 28Q166 28 167 28M223 30Q223 30 225 30M216 29Q219 29 222 30M225 30Q224 30 222 30M203 31Q200 31 197 31M203 31Q203 30 201 30M201 30Q201 30 200 30M200 30Q195 30 190 30M197 31Q194 31 191 31M191 31Q191 30 190 30M208 30Q205 30 201 30M196 29Q198 29 200 30M186 30Q188 30 190 30M189 31Q190 31 191 31M189 31Q183 30 178 30M224 29Q223 29 224 29M217 29Q221 29 224 29M222 30Q225 30 227 29M220 28Q222 28 224 29M217 27Q224 27 229 27M139 26Q134 27 131 27M136 26Q132 26 129 26M131 27Q130 27 129 26M123 26Q122 26 123 26M129 26Q125 26 123 26M113 26Q112 26 112 26M113 26Q117 26 121 26M121 26Q122 26 123 26M77 28Q75 28 73 28M77 28Q78 28 78 28M73 28Q73 28 73 28M78 27Q76 27 73 27M78 27Q80 27 82 27M82 27Q81 27 78 28M106 26Q106 26 106 26M113 26Q114 26 114 27M106 26Q108 26 111 27M114 27Q112 27 111 27M106 26Q106 26 105 26M105 26Q103 27 101 27M101 27Q104 27 107 27M111 27Q108 27 107 27M77 28Q78 28 81 29M73 28Q72 28 73 29M81 29Q77 29 73 29M66 28Q65 28 65 28M65 28Q68 29 69 29M73 29Q71 29 69 29M103 26Q100 26 97 26M108 25Q103 25 98 25M98 25Q97 25 97 26M101 24Q104 25 109 25M101 24Q99 25 97 25M97 25Q97 25 98 25M98 25Q98 25 98 25M91 24Q92 25 92 25M92 25Q90 25 89 25M89 25Q87 25 85 25M77 25Q80 25 82 25M82 25Q84 25 85 25M92 25Q94 25 97 25M69 25Q68 25 68 25M62 25Q65 25 68 25M67 25Q69 25 69 25M67 25Q64 25 60 25M60 25Q60 25 58 25M76 25Q72 25 67 25M76 25Q76 25 77 25M67 25Q67 25 67 25M30 24Q28 25 26 25M26 25Q24 25 21 25M30 25Q29 25 28 25M30 25Q33 25 34 25M28 25Q27 25 26 25M26 25Q27 25 26 25M12 25Q14 25 16 25M21 25Q18 25 16 25M8 25Q12 25 15 25M16 25Q16 25 15 25M18 26Q16 26 12 26M18 26Q20 26 23 26M23 26Q20 26 20 25M12 26Q15 26 17 25M17 25Q18 25 20 25M28 25Q30 25 29 26M29 26Q26 26 23 26M26 25Q23 25 20 25M15 25Q16 25 17 25M-4 31Q-5 31 -5 30M10 30Q10 30 9 30M9 30Q9 30 8 30M8 30Q2 30 -4 31M8 30Q5 30 4 29M4 29Q1 30 -4 30M-4 30Q-5 30 -5 30M50 25Q50 25 49 26M60 25Q59 26 58 26M49 26Q53 26 58 26M61 26Q59 26 58 26M67 26Q68 25 67 25M58 26Q58 26 58 26M30 25Q33 25 37 25M29 26Q30 26 32 26M32 26Q34 26 37 25M39 25Q39 25 38 25M49 26Q47 26 45 26M45 26Q41 26 38 25M38 25Q38 25 37 25M65 28Q59 28 54 28M65 28Q61 29 57 29M54 28Q55 28 57 29M62 26Q59 26 58 27M58 26Q55 26 51 26M58 27Q55 26 51 26M45 26Q45 26 45 26M45 26Q47 26 50 26M51 26Q51 26 50 26M30 30Q30 30 28 30M30 30Q26 30 22 29M28 30Q23 30 18 30M22 29Q21 30 18 30M22 29Q23 29 24 29M22 29Q23 29 22 29M24 29Q29 29 35 29M31 30Q35 29 35 29M31 30Q31 30 30 30M15 31Q16 30 18 30M28 31Q28 30 28 30M9 30Q11 30 14 30M14 30Q18 30 22 29M-8 26Q-6 27 -4 27M-4 27Q-6 27 -7 27M11 26Q8 26 6 26M11 26Q8 26 7 27M6 26Q1 26 -1 27M7 27Q3 27 -0 27M-1 27Q-1 27 -0 27M4 26Q4 26 6 26M12 26Q11 26 11 26M18 26Q18 26 18 26M18 26Q13 27 7 27M7 27Q7 27 7 27M-4 27Q-3 27 -1 27M-1 28Q-1 28 -1 28M-1 28Q-0 28 2 28M-1 28Q2 27 7 27M5 28Q4 28 2 28M5 28Q8 28 12 28M7 27Q10 27 14 27M12 28Q13 27 14 27M14 27Q14 27 14 27M-11 28Q-6 28 -1 28M-0 27Q0 27 -1 28M7 27Q7 27 7 27M18 26Q19 26 19 26M19 26Q17 27 14 27M19 26Q21 26 22 27M22 27Q22 27 23 27M23 27Q18 27 14 27M2 28Q-3 28 -7 29M7 29Q5 29 4 29M7 29Q4 29 5 28M4 29Q-1 29 -7 29M147 29Q147 29 147 29M158 29Q157 30 158 30M158 30Q151 30 146 30M145 29Q146 29 147 29M145 29Q143 29 146 30M146 30Q146 30 146 30M143 27Q141 27 138 27M131 27Q131 27 131 27M131 27Q134 27 138 27M147 29Q143 28 141 28M138 27Q140 28 141 28M134 29Q135 29 136 28M134 29Q140 29 145 29M141 28Q138 28 136 28M152 31Q149 31 147 30M85 28Q86 27 87 27M85 28Q86 28 89 28M89 28Q93 28 96 28M96 28Q97 27 96 27M87 27Q91 27 95 27M95 27Q95 27 96 27M82 27Q83 27 84 27M84 27Q85 27 87 27M78 28Q82 28 85 28M87 29Q86 29 84 29M87 29Q89 28 89 28M81 29Q83 29 84 29M87 29Q89 29 91 29M91 29Q96 29 101 28M101 28Q101 28 101 28M101 28Q98 28 96 28M101 27Q98 27 96 27M107 27Q107 27 107 27M107 27Q107 28 106 28M101 28Q103 28 106 28M65 28Q65 28 65 28M63 30Q62 30 62 30M63 30Q65 29 68 29M69 29Q68 29 68 29M55 29Q56 29 57 29M55 29Q58 29 60 30M62 30Q61 30 60 30M51 29Q53 29 55 29M51 29Q51 30 48 30M60 30Q54 30 48 30M79 30Q81 29 83 29M79 30Q78 30 78 30M83 29Q87 30 91 30M78 30Q83 30 87 31M87 31Q88 30 91 30M84 29Q83 29 83 29M68 29Q74 29 79 30M63 30Q68 30 71 31M75 31Q73 31 71 31M75 31Q77 30 78 30M76 25Q76 25 77 25M72 26Q72 26 73 26M77 25Q76 26 73 26M78 27Q77 26 78 26M78 26Q76 26 73 26M62 30Q60 30 60 30M60 30Q60 31 59 31M60 30Q54 30 49 31M48 30Q48 30 48 30M49 31Q48 31 48 30M22 27Q29 26 34 27M22 27Q26 26 32 26M32 26Q32 26 34 27M22 27Q22 27 22 27M23 27Q23 27 23 27M34 27Q34 27 34 27M34 27Q34 27 33 27M23 27Q28 27 33 27M32 26Q32 26 32 26M38 26Q42 26 45 26M38 26Q36 27 34 27M14 30Q13 29 12 29M7 29Q9 29 12 29M4 29Q4 29 4 29M12 29Q12 29 12 29M12 28Q14 28 17 28M12 29Q15 28 17 28M23 27Q22 27 23 28M17 28Q20 28 23 28M42 30Q40 30 38 30M42 30Q43 30 47 30M38 30Q38 30 37 30M47 30Q43 31 39 31M37 30Q38 31 39 31M31 30Q35 30 38 30M35 29Q37 29 38 29M45 29Q45 29 45 29M45 29Q44 29 42 30M45 29Q42 29 39 29M39 29Q39 29 38 29M51 29Q48 29 45 29M48 30Q47 30 47 30M28 31Q32 31 37 30M48 27Q53 27 57 27M48 27Q47 27 46 27M46 27Q46 27 45 27M46 27Q48 28 51 28M46 27Q45 27 45 27M54 28Q53 28 51 28M54 28Q57 27 60 27M60 27Q59 27 57 27M58 27Q58 27 57 27M50 26Q49 27 48 27M38 26Q42 27 46 27M45 29Q47 28 51 28M39 29Q40 28 46 27M54 28Q54 28 54 28M61 27Q61 27 60 27M35 28Q36 28 36 28M35 28Q29 28 23 29M24 28Q22 28 22 28M24 28Q29 27 34 27M34 27Q36 27 36 28M23 29Q22 29 22 28M38 29Q38 28 35 28M45 27Q41 27 36 28M24 29Q23 29 23 29M12 29Q17 29 22 28M23 28Q24 28 24 28M33 27Q35 27 34 27M-4 30Q-8 30 -12 30M158 30Q158 30 159 30M147 30Q147 30 146 30M153 31Q156 31 159 30M168 30Q166 30 164 31M164 31Q161 30 159 30M134 29Q134 29 134 29M146 30Q142 30 139 30M134 29Q138 29 139 30M139 31Q137 31 136 30M139 30Q138 30 136 30M108 29Q106 29 106 29M108 29Q106 30 102 30M102 30Q99 30 96 30M105 29Q106 29 106 29M105 29Q101 29 96 29M96 30Q96 30 96 29M106 28Q106 28 110 29M101 28Q104 29 105 29M110 29Q108 29 106 29M91 29Q93 29 96 29M91 30Q93 30 96 30M119 27Q124 27 129 27M119 27Q117 27 115 27M119 26Q125 27 130 27M119 26Q117 26 115 27M130 27Q129 27 129 27M121 26Q121 26 119 26M131 27Q130 27 130 27M114 27Q115 27 115 27M136 28Q132 28 129 27M129 27Q129 27 129 27M129 27Q127 28 127 28M134 29Q133 29 131 29M131 29Q131 29 130 29M130 29Q128 28 127 28M107 27Q110 27 112 28M119 27Q118 27 118 27M112 28Q114 27 118 27M127 28Q124 28 120 28M118 27Q120 28 120 28M102 30Q102 30 102 30M102 30Q100 31 98 31M87 31Q87 31 87 31M84 27Q86 27 87 26M95 27Q95 27 95 26M87 26Q91 26 95 26M105 26Q100 26 95 26M97 26Q96 26 96 26M96 26Q96 26 95 26M95 26Q95 26 95 26M87 25Q85 25 83 25M87 25Q88 25 89 25M83 25Q82 25 81 25M81 25Q83 26 83 26M89 25Q89 25 90 26M90 26Q88 26 84 26M83 26Q83 26 84 26M89 25Q88 25 87 25M82 25Q83 25 83 25M98 25Q94 25 89 25M77 25Q79 25 81 25M78 26Q81 26 83 26M96 26Q92 26 90 26M87 26Q85 26 84 26M120 29Q119 29 119 28M120 29Q120 29 119 29M119 29Q119 29 119 29M119 29Q115 29 111 29M119 28Q116 28 113 28M111 29Q112 28 113 28M130 29Q125 29 120 29M120 28Q120 28 119 28M112 28Q112 28 113 28M110 29Q110 29 111 29M128 30Q130 30 134 30M128 30Q126 30 125 30M125 30Q125 30 123 30M134 30Q131 30 127 31M127 31Q125 30 123 30M131 29Q129 29 128 30M136 30Q135 30 134 30M119 29Q122 29 125 30M112 30Q114 29 118 29M112 30Q114 30 114 30M118 29Q118 30 119 30M114 30Q117 30 119 30M108 29Q110 29 112 30M119 29Q118 29 118 29M102 30Q103 30 104 30M104 30Q109 30 114 30M114 30Q114 30 114 30M123 30Q121 30 119 30" stroke="#13200a" stroke-width="0.40" stroke-opacity="0.40" fill="none"/>
<path d="M213 30Q215 31 214 31M10 30Q5 31 -1 31M15 31Q14 31 14 31M176 31Q172 31 168 30M209 31Q206 31 203 31M-4 31Q-4 31 -5 31M14 31Q15 31 15 31M147 30Q142 31 139 31M71 31Q68 31 66 31M66 31Q63 31 59 31M152 31Q153 31 153 31M98 31Q99 31 98 31M98 31Q93 31 87 31M39 31Q39 31 37 31M49 31Q49 31 49 31M164 31Q164 31 166 32M128 31Q129 31 127 31M114 30Q115 31 118 31M104 30Q106 31 107 32" stroke="#13200a" stroke-width="0.40" stroke-opacity="0.60" fill="none"/>
<path d="M223 31Q221 31 218 32M218 32Q216 32 214 31M218 32Q218 32 219 32M219 32Q224 32 229 32M4 32Q1 32 -1 31M4 32Q9 31 14 31M175 36Q168 36 163 36M175 36Q178 36 179 36M166 37Q165 36 163 36M21 34Q15 34 9 35M21 34Q21 34 18 33M9 35Q10 34 10 34M10 34Q14 34 18 33M209 31Q206 31 205 32M203 32Q204 32 205 32M203 32Q201 31 197 31M214 31Q212 31 209 31M219 32Q218 32 218 33M218 33Q225 33 232 34M205 32Q211 32 217 33M218 33Q218 33 217 33M189 31Q190 31 191 31M203 32Q202 32 202 32M202 32Q196 32 191 31M207 34Q208 34 208 34M207 34Q210 33 214 33M208 34Q212 35 216 35M216 35Q216 34 218 34M218 34Q218 34 216 33M214 33Q215 33 216 33M223 36Q226 36 228 36M223 36Q220 35 216 35M228 36Q222 35 221 34M221 34Q219 34 218 34M217 33Q216 33 216 33M202 32Q203 32 203 33M203 33Q208 33 214 33M139 37Q140 36 139 36M144 36Q141 36 139 36M144 36Q147 36 150 36M150 36Q152 36 151 37M74 33Q70 33 67 34M74 33Q73 32 71 32M71 32Q69 32 68 32M68 32Q68 33 66 34M66 34Q67 34 67 34M74 32Q73 32 71 32M74 32Q80 32 85 32M85 32Q85 32 84 33M84 33Q79 33 74 33M60 34Q63 34 66 34M60 34Q59 34 56 34M56 34Q57 35 55 36M71 34Q69 34 67 34M71 34Q64 35 56 36M56 36Q56 36 55 36M71 34Q73 34 74 35M84 33Q85 33 85 33M85 33Q84 33 84 33M84 33Q79 34 74 35M161 36Q161 36 161 36M161 36Q156 35 152 35M161 36Q156 36 150 36M152 35Q152 35 150 36M175 36Q174 35 173 35M173 35Q167 35 162 35M162 35Q162 35 161 36M163 36Q162 36 161 36M150 36Q150 36 150 36M56 34Q54 34 51 34M55 36Q53 36 52 36M52 36Q49 35 46 35M51 34Q50 35 46 35M41 36Q46 36 52 36M41 36Q38 36 37 35M46 35Q41 36 37 35M18 36Q22 37 29 36M18 36Q17 36 17 36M-1 37Q3 36 5 36M-8 35Q1 35 6 35M6 35Q7 35 5 36M-9 36Q-6 36 -2 37M-1 31Q-3 31 -4 31M-4 31Q-5 31 -5 31M-4 31Q-6 32 -11 32M24 31Q20 31 15 31M24 31Q27 31 28 31M179 36Q182 36 185 36M185 36Q188 36 188 35M173 35Q174 35 173 34M173 34Q180 35 188 35M221 34Q225 34 230 34M223 36Q222 36 222 36M224 37Q224 37 222 36M203 33Q203 33 202 33M207 34Q204 33 202 33M202 33Q202 33 202 33M131 33Q131 34 129 34M131 33Q134 33 137 33M129 34Q133 34 136 34M137 33Q137 33 138 33M138 33Q135 34 136 34M144 36Q143 35 143 35M152 35Q151 34 149 34M143 35Q146 34 149 34M145 31Q149 31 152 31M145 31Q143 31 141 31M141 31Q140 31 139 31M139 37Q133 36 127 36M139 36Q134 35 128 35M129 34Q129 34 129 34M136 34Q140 34 143 35M128 35Q128 35 129 34M56 36Q57 36 57 36M70 36Q64 36 59 36M70 36Q74 35 75 35M74 35Q74 35 75 35M57 36Q58 36 59 36M78 36Q75 36 71 36M90 36Q93 36 95 37M90 36Q86 36 83 37M37 35Q38 35 38 34M37 35Q29 35 22 35M38 34Q38 34 38 34M38 34Q33 34 31 33M31 33Q26 34 22 34M22 34Q21 35 21 35M22 35Q22 35 21 35M51 34Q51 34 51 34M51 34Q45 34 38 34M37 35Q36 35 37 35M37 35Q37 35 37 35M37 35Q33 36 29 36M18 36Q18 36 18 36M18 36Q20 36 22 35M50 33Q47 33 45 33M50 33Q51 33 51 34M45 33Q42 33 38 34M21 34Q21 34 22 34M9 35Q8 35 7 35M7 35Q14 35 21 35M7 35Q7 35 6 35M5 36Q12 36 18 36M17 36Q14 37 12 37M-5 34Q-0 34 5 33M-11 34Q-8 33 -4 33M5 33Q7 33 7 33M-4 33Q-0 32 3 32M3 32Q5 33 7 33M10 34Q8 34 5 33M-11 32Q-6 32 -4 33M4 32Q4 32 3 32M15 31Q11 32 9 33M9 33Q8 33 7 33M170 32Q173 33 173 34M170 32Q177 32 183 33M173 34Q178 34 183 34M183 33Q184 33 183 34M188 34Q191 35 191 35M188 34Q185 34 183 34M173 34Q173 34 172 34M188 35Q189 35 191 35M172 34Q173 34 173 34M208 36Q211 36 212 36M208 36Q203 36 198 36M198 35Q198 36 198 36M198 35Q199 35 203 35M212 36Q207 35 203 35M203 35Q203 35 203 35M222 36Q217 36 212 36M196 34Q199 34 203 35M196 34Q193 34 188 34M191 35Q194 35 198 35M208 34Q206 35 203 35M196 34Q196 34 196 34M196 34Q199 33 202 33M198 36Q198 36 199 36M184 33Q182 32 180 32M184 33Q187 33 190 33M190 33Q192 33 192 32M180 32Q185 32 189 32M189 32Q190 32 192 32M196 34Q193 33 190 33M183 33Q184 33 184 33M202 33Q197 33 192 32M176 31Q177 31 177 31M177 31Q178 31 180 32M191 31Q190 32 189 32M139 31Q139 31 139 31M128 32Q129 33 131 33M128 32Q126 32 126 32M137 33Q139 33 139 32M139 32Q139 32 137 31M137 31Q133 31 128 31M126 32Q127 31 128 31M139 32Q144 33 149 33M141 31Q146 32 150 32M137 31Q138 31 139 31M149 33Q150 33 150 32M138 33Q143 33 149 34M149 33Q150 33 149 34M149 34Q150 34 149 34M149 34Q149 34 149 34M162 35Q159 34 158 34M149 34Q154 34 158 34M172 34Q168 34 163 34M158 34Q161 34 163 34M98 31Q96 32 94 32M87 31Q87 31 87 32M87 32Q90 32 94 32M74 32Q75 31 75 31M85 32Q86 32 87 32M127 36Q126 36 126 36M128 35Q128 35 127 35M126 36Q127 36 127 35M128 32Q126 33 121 33M129 34Q124 34 121 34M121 33Q120 33 121 34M55 31Q60 32 66 32M55 31Q57 32 57 32M58 32Q63 32 66 32M58 32Q57 32 57 32M66 32Q66 32 66 32M66 31Q66 31 66 32M59 31Q57 31 55 31M55 31Q55 31 55 31M60 34Q58 33 58 32M68 32Q67 32 66 32M50 33Q53 33 57 32M24 31Q25 32 25 32M37 31Q31 31 25 32M18 33Q22 33 25 32M31 33Q30 33 31 33M31 33Q28 32 25 32M9 33Q16 32 23 32M25 32Q23 32 23 32M25 32Q24 32 23 32M50 31Q47 32 44 32M50 31Q50 31 49 31M49 31Q44 31 38 31M44 32Q41 32 38 32M38 32Q38 32 38 31M45 33Q44 32 44 32M55 31Q53 31 50 31M37 31Q38 31 38 31M31 33Q34 32 38 32M154 32Q157 33 160 33M154 32Q154 32 155 32M160 33Q166 33 169 32M155 32Q156 32 157 31M157 31Q161 31 166 32M166 32Q167 32 168 32M168 32Q168 32 169 32M150 32Q152 32 154 32M163 34Q161 33 160 33M145 31Q150 32 155 32M170 32Q170 32 169 32M153 31Q156 31 157 31M177 31Q172 32 168 32M126 36Q124 36 122 36M122 36Q121 36 119 37M119 37Q113 36 106 36M106 36Q106 36 106 36M99 35Q97 34 97 33M99 35Q95 35 90 35M90 35Q88 35 87 35M97 33Q97 33 97 33M97 33Q91 34 87 34M87 34Q87 35 86 35M87 35Q87 35 86 35M90 36Q90 36 90 35M78 36Q84 36 87 35M85 33Q91 33 97 33M84 33Q84 34 87 34M75 35Q80 35 86 35M70 36Q70 36 71 36M106 36Q106 36 105 35M99 35Q102 35 105 35M105 35Q105 35 105 35M122 36Q116 36 111 35M105 35Q108 35 111 35M127 35Q121 35 114 35M111 35Q113 35 114 35M121 34Q118 34 114 34M114 35Q114 34 114 34M97 33Q98 33 98 33M105 35Q105 34 106 33M98 33Q102 33 106 33M94 32Q97 32 99 32M98 33Q99 33 99 32M114 34Q111 34 108 33M106 33Q107 33 108 33M59 36Q59 36 59 37M118 31Q122 32 126 32M105 32Q104 32 104 32M105 32Q106 32 107 32M104 32Q108 32 109 33M107 32Q111 32 115 32M115 32Q115 32 114 32M114 32Q111 33 109 33M98 31Q102 32 105 32M99 32Q101 32 104 32M108 33Q109 33 109 33M118 31Q116 32 115 32M121 33Q118 33 114 32" stroke="#13200a" stroke-width="0.50" stroke-opacity="0.60" fill="none"/>
<path d="M179 36Q177 37 174 37M174 37Q170 37 166 37M139 37Q141 37 141 38M141 38Q147 38 151 37M166 37Q164 38 160 38M151 37Q155 38 160 38M151 42Q148 42 146 42M151 42Q155 42 161 41M146 42Q146 41 148 40M148 40Q154 41 161 41M17 36Q19 37 19 38M29 36Q28 37 27 37M27 37Q23 38 19 38M9 38Q5 39 0 40M9 38Q13 38 18 38M18 38Q17 38 17 39M0 40Q8 39 17 39M-1 37Q-2 37 -2 37M15 45Q16 45 18 44M25 44Q21 44 18 44M-1 46Q6 45 11 43M16 44Q13 44 11 43M16 44Q17 44 18 44M33 44Q33 45 36 45M33 44Q29 44 25 44M9 43Q3 43 -4 43M9 43Q11 43 11 43M-6 43Q-5 43 -4 43M-1 40Q2 40 3 41M-1 40Q-6 40 -11 41M3 41Q-2 42 -4 43M179 38Q177 38 174 37M179 38Q185 38 190 38M185 36Q187 37 189 37M190 38Q189 37 189 37M147 45Q152 44 151 42M160 43Q163 44 166 45M160 43Q156 43 151 42M166 45Q166 45 166 45M167 42Q170 43 176 43M167 42Q166 43 160 43M176 43Q169 44 166 45M151 42Q151 42 151 42M167 42Q167 42 167 41M161 41Q164 41 167 41M146 42Q145 42 145 42M145 42Q137 41 130 41M145 39Q138 40 131 40M145 39Q145 40 147 40M147 40Q148 40 148 40M131 40Q131 40 130 41M133 44Q138 42 145 42M133 44Q127 42 127 41M130 41Q128 41 127 41M141 38Q140 38 140 38M140 38Q137 38 133 38M127 36Q132 37 133 38M140 38Q142 38 144 39M145 39Q145 39 144 39M131 40Q128 39 126 38M133 38Q130 38 126 38M120 41Q123 39 125 38M120 41Q123 41 127 41M125 38Q126 38 126 38M91 41Q91 40 89 40M91 41Q98 41 103 41M104 39Q102 40 103 41M104 39Q99 39 95 39M95 39Q92 39 89 40M78 36Q80 37 83 37M70 38Q70 37 71 36M70 38Q74 38 81 39M83 37Q85 37 85 38M85 38Q84 38 81 39M95 37Q94 37 93 37M85 38Q89 38 93 37M179 38Q179 39 181 39M196 39Q194 38 190 38M196 39Q195 39 191 40M181 39Q186 40 191 40M225 45Q214 44 207 43M206 45Q204 44 203 43M203 43Q205 43 206 43M207 43Q206 43 206 43M226 43Q218 42 209 41M228 43Q217 43 207 43M209 41Q207 42 206 43M160 40Q163 40 165 40M160 40Q158 39 154 39M165 40Q168 40 168 39M168 39Q165 39 160 38M160 38Q157 38 154 39M147 40Q154 40 160 40M167 41Q167 41 167 41M167 41Q166 41 165 40M144 39Q149 39 154 39M160 38Q160 38 160 38M181 39Q179 39 177 40M177 40Q172 39 168 39M12 37Q10 37 9 38M12 37Q6 37 -0 37M9 38Q3 38 -1 38M-0 37Q-0 37 -1 38M9 38Q9 38 9 38M18 38Q19 38 19 38M-1 37Q-1 37 -0 37M-5 39Q-2 38 -1 38M-5 39Q-4 39 -0 40M-0 40Q0 40 0 40M9 43Q12 42 15 41M3 41Q6 41 9 41M15 41Q13 41 9 41M-0 40Q-1 40 -1 40M17 39Q17 39 17 39M9 41Q14 40 17 39M36 45Q42 45 48 45M48 45Q48 45 49 45M-2 37Q-9 37 -17 38M214 37Q211 37 208 36M214 37Q219 37 224 37M189 37Q192 37 194 37M199 36Q197 37 194 37M206 40Q200 40 195 40M206 40Q208 40 208 39M196 39Q201 39 207 39M191 40Q193 40 195 40M208 39Q207 39 207 39M226 43Q223 41 221 40M209 41Q208 41 206 40M208 39Q214 40 221 40M194 37Q201 37 208 38M207 39Q207 39 208 38M199 36Q206 37 210 38M208 38Q209 38 210 38M214 37Q213 38 213 38M213 38Q211 38 210 38M176 43Q180 43 184 44M184 44Q189 44 192 45M206 45Q201 45 195 45M16 44Q25 43 29 41M38 42Q37 43 33 44M38 42Q38 42 38 42M38 42Q35 41 29 41M15 41Q22 41 28 40M29 41Q30 41 28 40M100 43Q103 43 106 44M100 43Q94 43 89 43M106 44Q104 45 101 46M89 43Q87 44 87 45M115 42Q109 42 103 41M115 42Q116 42 117 43M103 41Q102 42 100 43M117 43Q112 44 106 44M91 41Q91 41 90 41M103 41Q103 41 103 41M89 43Q89 42 90 41M89 43Q89 43 89 43M38 42Q44 43 50 43M48 45Q49 44 51 44M50 43Q51 44 51 44M69 45Q66 45 62 44M69 45Q75 44 76 42M76 42Q76 42 75 42M75 42Q68 43 63 44M62 44Q62 44 63 44M69 45Q69 45 69 45M51 44Q56 44 62 44M89 43Q83 42 76 42M50 43Q53 42 57 42M63 44Q65 43 64 42M64 42Q60 42 57 42M180 41Q183 42 185 43M180 41Q180 41 181 40M181 40Q188 41 196 42M185 43Q192 43 197 42M197 42Q197 42 196 42M167 41Q173 41 180 41M184 44Q184 43 185 43M177 40Q178 40 181 40M195 40Q196 41 196 42M203 43Q200 43 197 42M231 40Q225 40 221 40M221 40Q219 39 218 38M230 39Q224 39 218 38M221 40Q221 40 221 40M213 38Q216 38 218 38M125 38Q123 38 121 37M125 38Q117 38 110 39M121 37Q114 37 108 38M110 39Q109 39 108 39M108 39Q107 38 107 38M107 38Q108 38 108 38M125 38Q125 38 125 38M119 37Q121 37 121 37M120 41Q119 41 119 41M119 41Q115 40 110 39M106 36Q107 37 108 38M104 39Q106 39 108 39M119 41Q116 41 115 42M95 39Q93 38 94 38M94 38Q101 38 107 38M95 37Q101 37 106 36M93 37Q94 38 94 38M17 39Q22 40 29 40M28 40Q29 40 29 40M29 40Q29 40 29 40M27 37Q32 38 35 38M29 40Q30 39 35 38M41 36Q41 37 42 37M35 38Q39 38 42 37M57 36Q51 37 43 37M42 37Q42 38 43 37M59 37Q56 37 53 38M59 37Q59 38 62 39M53 38Q57 39 60 39M62 39Q61 39 60 39M48 39Q46 38 43 37M48 39Q50 39 53 38M70 38Q65 38 62 39M68 40Q68 41 71 42M68 40Q74 39 81 39M81 39Q82 39 82 39M82 39Q81 40 78 41M78 41Q75 41 74 42M74 42Q72 42 71 42M64 42Q67 42 71 42M57 42Q56 41 55 41M55 41Q58 40 61 39M61 39Q65 39 68 40M81 39Q81 39 81 39M61 39Q61 39 60 39M89 40Q86 39 82 39M90 41Q84 41 78 41M75 42Q75 42 74 42M40 40Q43 39 45 39M40 40Q41 41 45 41M45 39Q48 40 52 41M45 41Q49 41 52 41M29 40Q34 40 40 40M48 39Q46 39 45 39M38 42Q41 42 45 41M55 41Q54 41 52 41M120 45Q120 44 120 44M120 44Q127 44 133 44M133 44Q135 44 138 45M117 43Q118 44 120 44M133 44Q133 44 133 44M143 45Q141 45 139 45M138 45Q139 45 139 45M147 45Q145 45 143 45" stroke="#13200a" stroke-width="0.75" stroke-opacity="0.60" fill="none"/>
<path d="M-1 48Q-1 47 -1 46M-1 46Q-6 45 -10 45M15 45Q21 46 22 47M22 47Q22 47 23 47M23 47Q26 45 25 44M-1 48Q7 46 15 45M-2 48Q11 47 22 47M36 45Q33 46 30 47M30 47Q28 47 26 47M26 47Q25 47 23 47M34 48Q32 47 30 47M147 45Q154 45 161 46M161 46Q164 45 166 45M212 46Q209 45 206 45M212 46Q217 46 220 46M225 45Q222 45 220 46M221 49Q216 47 212 46M230 47Q225 47 220 46M61 46Q54 46 49 45M61 46Q61 46 61 46M61 46Q54 47 46 48M49 45Q46 46 46 48M171 46Q181 46 189 46M171 46Q168 45 166 45M189 46Q191 45 192 45M197 46Q196 46 195 45M101 46Q94 45 87 45M69 45Q64 46 61 46M69 45Q72 45 73 46M73 46Q68 47 68 49M85 46Q86 46 85 47M85 46Q81 46 77 46M77 46Q79 47 75 49M73 46Q75 46 77 46M85 46Q86 45 87 45M192 45Q193 45 195 45M171 46Q175 47 181 49M161 46Q160 47 161 48M101 46Q103 46 105 47M105 47Q105 47 105 47M105 47Q103 47 101 48M85 47Q87 48 88 48M105 47Q112 48 121 48M120 45Q122 45 123 46M123 46Q131 45 138 45M105 47Q114 46 120 45M126 47Q125 47 123 46M129 47Q136 46 139 45M135 48Q140 47 146 47M146 47Q145 46 143 45M126 47Q127 47 129 47M189 46Q187 47 189 50" stroke="#13200a" stroke-width="0.75" stroke-opacity="0.80" fill="none"/>
<path d="M-3 49Q-3 49 -2 48M-3 49Q-16 51 -30 51M-2 48Q-9 48 -18 48M-25 53Q-14 52 -4 50M-4 50Q-3 49 -3 49M-6.6 59.6Q1.0 58.6 5.8 57.1M14.0 60.5Q14.0 58.6 18.8 56.7M5.8 57.1Q12.7 56.6 18.8 56.7M-2 48Q-2 48 -2 48M-2 48Q-1 48 -1 48M-1.6 51.2Q-11.5 53.4 -15.0 56.0M-2 51Q-3 53 3 54M3.2 54.3Q2.3 54.6 1.4 54.8M1.4 54.8Q-6.3 55.2 -14.0 56.4M5.8 57.1Q2.0 56.1 1.4 54.8M-1 51Q-3 50 -3 50M-1 51Q-1 51 -2 51M-3 50Q-16 52 -22 55M-4 50Q-4 50 -3 50M26.0 55.9Q30.6 53.9 34.4 52.1M26.0 55.9Q30.9 55.9 35.0 56.3M34 52Q36 52 37 52M37 52Q41 53 46 53M35.0 56.3Q38.7 54.5 46.0 53.4M37 52Q40 50 46 50M61 53Q59 53 57 53M61 53Q62 51 60 50M46.0 53.4Q51.6 53.2 57.1 53.2M46 50Q53 50 60 50M9.2 53.6Q12.5 53.7 16.2 53.4M9 54Q9 52 13 50M16 53Q20 52 25 52M13 50Q13 50 13 50M13 50Q19 51 25 51M25 52Q25 52 25 51M18.8 56.7Q19.0 56.6 19.2 56.6M19.2 56.6Q15.8 55.2 16.2 53.4M3.2 54.3Q6.1 53.9 9.2 53.6M-1 51Q5 51 13 50M26.0 55.9Q22.7 56.4 19.2 56.6M34 52Q29 52 25 52M26 47Q19 49 13 50M34 48Q29 50 25 51M34 48Q38 48 44 48M44 48Q45 49 46 50M228 49Q223 48 221 49M35.0 56.3Q37.9 57.1 39.8 58.1M57.1 53.2Q51.2 54.8 49.3 56.9M39.8 58.1Q44.4 57.4 49.3 56.9M49.3 56.9Q52.9 57.7 58.1 58.0M58.1 58.0Q65.3 57.1 72.0 56.1M60.8 52.6Q67.0 53.6 75.3 53.9M72.0 56.1Q74.1 55.0 75.3 53.9M44 48Q45 48 46 48M60 50Q61 50 62 50M62 50Q60 48 61 46M219 49Q219 49 221 49M219 49Q210 47 197 46M62 50Q65 50 68 49M85 47Q80 48 75 49M68 49Q71 49 74 49M74 49Q75 49 75 49M161 48Q164 48 167 49M167 49Q175 49 181 49M96.3 56.4Q97.2 54.4 99.8 52.6M96.3 56.4Q87.4 54.5 75.9 53.8M80 53Q87 52 95 52M80.2 52.7Q78.0 53.3 75.9 53.8M95 52Q97 52 100 53M110.2 52.6Q110.0 54.3 114.2 56.0M110 53Q105 52 100 53M96.7 56.5Q96.5 56.5 96.3 56.4M96.7 56.5Q105.1 56.4 113.5 56.6M113.5 56.6Q114.0 56.3 114.2 56.0M75.3 53.9Q75.6 53.9 75.9 53.8M82 50Q78 50 74 49M82 50Q80 51 80 53M101 48Q103 49 102 49M101 48Q95 48 88 48M88 48Q88 49 86 49M86 49Q92 50 97 50M97 50Q100 50 102 49M82 50Q84 50 86 49M95 52Q96 51 97 50M110 53Q112 52 115 51M114.2 56.0Q124.5 55.1 131.8 53.5M115 51Q124 52 132 53M102 49Q107 51 115 51M115 51Q115 51 115 51M113.5 56.6Q113.7 56.7 114.0 56.8M115 51Q117 50 121 49M121 48Q120 49 121 49M121 48Q122 48 126 47M139.4 57.7Q134.3 55.6 134.0 53.5M139.4 57.7Q147.3 58.0 154.4 57.6M154.4 57.6Q146.0 55.3 140.4 53.0M134.0 53.5Q135.4 53.2 137.1 52.9M137 53Q139 53 140 53M131.8 53.5Q132.9 53.5 134.0 53.5M134.8 59.5Q124.3 58.0 114.0 56.8M134.8 59.5Q136.2 58.4 139.4 57.7M155.1 57.6Q160.3 56.9 162.1 55.6M155.1 57.6Q154.8 57.6 154.4 57.6M155.4 53.0Q158.8 54.2 162.1 55.6M155 53Q148 53 140 53M121 49Q128 50 136 51M136 51Q136 52 137 53M178.9 57.6Q171.4 56.6 164.1 55.7M164.1 55.7Q163.1 55.7 162.1 55.6M167 49Q167 50 169 51M169 51Q171 52 173 52M181 49Q184 49 188 50M173 52Q182 51 188 50M158 51Q163 51 169 51M158 51Q158 52 155 53M164.1 55.7Q168.7 53.8 176.9 52.8M173 52Q175 52 177 53M158 51Q155 51 153 50M136 51Q136 50 140 50M140 50Q146 50 153 50M161 48Q156 48 153 48M153 50Q154 49 153 48M178.9 57.6Q180.9 57.3 183.6 57.3M176.9 52.8Q180.9 53.8 185.7 54.6M185.7 54.6Q184.6 55.9 183.6 57.3M183.6 57.3Q191.7 58.4 199.9 59.7M219 49Q219 50 220 50M197 46Q200 48 204 50M204 50Q212 50 220 50M224 51Q222 51 221 51M220 50Q221 50 221 51M224.0 56.3Q222.9 56.1 221.6 55.9M213.4 60.0Q209.6 57.8 205.7 55.7M205.7 55.7Q212.7 55.4 221.6 55.9M221 51Q224 53 218 55M221.6 55.9Q220.1 55.2 217.7 54.6M129 47Q132 48 135 48M140 50Q137 49 135 48M153 48Q150 48 146 47M201.0 55.2Q196.0 55.1 190.8 54.5M201.0 55.2Q201.2 55.2 201.3 55.2M201 55Q200 53 200 51M191 55Q186 52 189 50M189 50Q194 50 199 50M189 50Q189 50 189 50M199 50Q199 51 200 51M185.7 54.6Q187.9 54.4 190.8 54.5M199.9 59.7Q202.2 57.5 201.0 55.2M205.7 55.7Q203.6 55.4 201.3 55.2M218 55Q207 53 200 51M188 50Q188 50 189 50M204 50Q201 50 199 50" stroke="#13200a" stroke-width="1.00" stroke-opacity="0.80" fill="none"/>
<path d="M-1.5 62.6Q6.2 61.3 14.0 60.5M-1.5 62.6Q-2.0 62.8 -2.9 63.1M14.0 60.5Q14.7 60.5 15.2 60.6M9.5 68.0Q7.5 64.5 -2.9 63.1M9.5 68.0Q15.5 67.0 21.5 66.4M15.2 60.6Q21.0 62.9 21.5 66.4M31.8 70.6Q28.3 68.0 21.7 66.4M21.5 66.4Q21.6 66.4 21.7 66.4M-1.5 62.6Q-7.0 61.5 -6.6 59.6M-2.9 63.1Q-8.3 64.1 -13.8 65.3M15.2 60.6Q26.4 60.2 37.5 59.5M21.7 66.4Q29.8 63.8 39.6 62.2M37.5 59.5Q40.0 60.6 39.6 62.2M37.5 59.5Q38.1 58.8 39.8 58.1M52.3 63.6Q54.4 66.0 54.1 68.9M52.3 63.6Q52.1 63.1 53.2 62.6M53.2 62.6Q53.6 62.6 54.0 62.5M54.0 62.5Q65.8 62.1 77.4 62.2M56.5 68.9Q66.8 67.0 76.8 65.5M56.5 68.9Q55.2 69.0 54.1 68.9M76.8 65.5Q76.0 63.8 77.4 62.2M31.8 70.6Q46.3 67.5 52.3 63.6M39.6 62.2Q47.3 61.8 53.2 62.6M58.1 58.0Q55.4 60.1 54.0 62.5M79.4 69.7Q79.3 68.9 80.8 68.1M80.8 68.1Q77.8 66.9 76.8 65.5M77.4 62.2Q77.6 62.1 77.9 62.0M77.9 62.0Q77.7 58.7 72.0 56.1M80.8 68.1Q85.8 68.3 90.9 68.1M88.8 61.1Q83.4 61.5 77.9 62.0M88.8 61.1Q95.3 62.6 104.3 62.8M90.9 68.1Q99.4 66.9 105.1 64.9M104.3 62.8Q103.9 63.9 105.1 64.9M105.1 64.9Q113.2 66.9 117.0 70.0M88.8 61.1Q94.7 58.9 96.7 56.5M104.3 62.8Q106.9 62.5 109.2 62.1M109.2 62.1Q111.7 59.3 114.0 56.8M178.9 57.6Q180.7 59.6 178.9 61.4M155.1 57.6Q158.9 59.4 164.1 61.3M178.9 61.4Q173.1 61.3 168.5 61.9M164.1 61.3Q166.3 61.6 168.5 61.9M155.8 70.4Q160.4 69.0 164.6 67.7M174.3 68.1Q173.2 67.9 172.0 67.7M164.6 67.7Q168.7 68.0 172.0 67.7M188.7 68.3Q192.9 66.5 198.6 65.2M211.8 74.1Q203.1 69.4 203.0 65.7M198.6 65.2Q200.0 65.3 201.3 65.4M201.3 65.4Q202.1 65.6 203.0 65.7M174.3 68.1Q182.0 68.6 188.7 68.3M178.9 61.4Q187.3 63.7 198.6 65.2M168.5 61.9Q174.0 64.8 172.0 67.7M121.3 69.6Q123.7 67.3 125.1 65.1M109.2 62.1Q110.7 62.2 112.2 62.3M125.1 65.1Q119.7 63.3 112.2 62.3M205.7 61.4Q219.8 62.9 233.6 65.8M205.7 61.4Q205.1 63.5 201.3 65.4M220.6 68.4Q223.3 68.6 224.9 68.3M220.6 68.4Q211.1 67.7 203.0 65.7M232.0 61.1Q221.9 59.9 213.4 60.0M205.2 60.9Q210.8 60.8 213.4 60.0M205.2 60.9Q205.4 61.1 205.7 61.4M135.3 60.1Q134.8 60.4 134.0 60.7M135.3 60.1Q142.0 61.6 150.4 62.4M134.0 60.7Q134.7 62.2 133.6 63.7M150.4 62.4Q152.1 63.6 152.8 64.8M152.8 64.8Q147.3 65.7 141.2 66.3M141.2 66.3Q137.9 64.9 133.6 63.7M134.8 59.5Q135.1 59.8 135.3 60.1M112.2 62.3Q123.4 61.5 134.0 60.7M164.1 61.3Q155.9 61.2 150.4 62.4M125.1 65.1Q128.8 64.2 133.6 63.7M164.6 67.7Q157.3 66.6 152.8 64.8M142.5 69.6Q141.1 67.9 141.2 66.3M205.2 60.9Q202.7 60.2 199.9 59.7" stroke="#13200a" stroke-width="1.25" stroke-opacity="0.80" fill="none"/>
<path d="M33.0 85.0Q34.1 79.4 39.5 74.5M39.5 74.5Q47.6 75.2 56.4 75.6M49.5 85.6Q54.5 80.2 56.4 75.6M12.8 79.1Q23.4 76.5 30.3 73.3M39.5 74.5Q36.9 73.7 35.4 72.8M30.3 73.3Q31.7 72.9 33.5 72.7M35.4 72.8Q34.4 72.7 33.5 72.7M12.8 79.1Q5.9 78.7 2.8 77.0M30.3 73.3Q12.7 74.6 -2.3 73.6M-2.3 73.6Q1.3 75.1 2.8 77.0M31.8 70.6Q32.0 71.7 33.5 72.7M9.5 68.0Q4.5 70.1 -3.9 71.6M-3.9 71.6Q-4.0 72.2 -5.7 73.0M-2.3 73.6Q-4.3 73.4 -5.7 73.0M2.8 77.0Q-6.3 80.0 -16.7 83.2M-3.9 71.6Q-7.3 70.5 -12.7 70.1M61.9 71.2Q70.9 70.7 79.4 69.7M61.9 71.2Q59.5 73.1 58.6 75.2M58.6 75.2Q70.0 74.7 80.4 75.7M79.4 69.7Q77.1 72.7 80.4 75.7M35.4 72.8Q46.2 71.4 54.1 68.9M61.9 71.2Q58.9 70.1 56.5 68.9M56.4 75.6Q57.6 75.5 58.6 75.2M81.8 76.3Q80.8 76.1 80.4 75.7M81.8 76.3Q94.8 74.4 104.8 71.6M90.9 68.1Q96.5 70.2 104.8 71.6M83.2 79.0Q82.8 77.6 81.8 76.3M111.7 71.4Q113.4 70.6 116.4 70.2M111.7 71.4Q108.3 71.5 104.8 71.6M116.4 70.2Q116.8 70.1 117.0 70.0M83.2 79.0Q95.7 78.9 106.0 81.5M111.7 71.4Q109.6 75.1 111.9 79.3M111.9 79.3Q110.1 80.8 106.0 81.5M138.1 70.5Q129.5 70.7 121.3 69.6M138.1 70.5Q140.1 72.8 142.4 75.2M116.4 70.2Q121.9 74.2 131.8 78.0M121.3 69.6Q119.3 69.9 117.0 70.0M142.4 75.2Q135.5 75.9 131.8 78.0M111.9 79.3Q121.1 78.5 130.8 79.1M131.8 78.0Q130.9 78.4 130.8 79.1M180.3 82.7Q179.0 80.1 175.9 77.7M167.8 76.5Q171.7 77.2 175.9 77.7M167.8 76.5Q161.7 77.6 153.6 77.5M153.6 77.5Q151.2 80.2 152.3 83.6M138.1 70.5Q140.2 70.1 142.5 69.6M155.8 70.4Q149.1 69.7 142.5 69.6M155.8 70.4Q158.5 73.6 167.8 76.5M142.4 75.2Q148.2 76.1 153.6 77.5M184.1 76.1Q182.5 71.9 174.3 68.1M184.1 76.1Q180.5 77.0 175.9 77.7M188.7 68.3Q195.3 71.0 202.7 73.9M202.7 73.9Q207.1 73.9 211.8 74.1M184.1 76.1Q189.9 76.4 195.8 76.8M195.8 76.8Q198.6 75.1 202.7 73.9M195.8 76.8Q202.1 79.9 212.2 82.3M211.8 74.1Q218.2 74.7 224.8 75.9M220.6 68.4Q228.5 71.5 229.6 74.5" stroke="#13200a" stroke-width="1.50" stroke-opacity="0.80" fill="none"/>
<path d="M25.5 86.3Q19.4 87.1 13.6 87.2M33.0 85.0Q40.7 85.8 49.5 85.6M5.1 85.1Q10.0 85.9 13.6 87.2M5.1 85.1Q6.7 82.0 12.8 79.1M33.0 85.0Q29.2 85.4 25.5 86.3M5.1 85.1Q-1.5 86.4 -7.6 86.4M49.5 85.6Q53.8 85.9 56.2 87.2M83.2 79.0Q76.1 81.7 70.5 85.2M56.2 87.2Q63.1 85.6 70.5 85.2M180.3 82.7Q169.2 83.2 162.2 86.0M162.2 86.0Q156.5 85.3 152.3 83.6M192.7 87.0Q185.2 85.1 180.3 82.7M192.7 87.0Q198.8 91.5 198.2 95.9M173.3 97.2Q171.2 91.1 162.2 86.0M140.1 84.0Q134.1 81.7 130.8 79.1M140.1 84.0Q146.2 83.8 152.3 83.6M192.7 87.0Q200.7 84.8 213.9 85.6M230.7 91.6Q220.4 88.9 213.9 85.6M213.9 85.6Q213.9 84.0 212.2 82.3M212.2 82.3Q222.5 81.7 232.2 80.9M140.1 84.0Q136.3 85.4 135.5 87.5M70.5 85.2Q80.3 87.7 86.8 92.0M89.3 91.9Q102.9 88.9 108.1 83.8M114.3 97.4Q110.6 90.8 111.4 85.1M108.1 83.8Q109.4 84.6 111.4 85.1M106.0 81.5Q107.1 82.6 108.1 83.8M135.5 87.5Q123.7 85.2 111.4 85.1" stroke="#13200a" stroke-width="1.75" stroke-opacity="0.80" fill="none"/>
<path d="M27.3 102.4Q11.2 102.4 -1.0 99.9M27.3 102.4Q25.8 93.6 25.5 86.3M-1.0 99.9Q6.4 93.0 13.6 87.2M-4.2 100.7Q-15.8 102.9 -25.9 102.8M-1.0 99.9Q-2.7 100.2 -4.2 100.7M32.7 103.8Q39.4 100.6 47.5 98.8M47.5 98.8Q49.1 98.8 50.4 99.1M47.5 98.8Q48.2 92.5 56.2 87.2M173.3 97.2Q177.8 97.7 182.4 98.5M198.2 95.9Q191.1 97.6 182.4 98.5M173.3 97.2Q165.3 98.0 157.2 98.8M182.4 98.5Q182.6 98.7 182.6 98.8M238.0 100.4Q226.4 99.9 214.4 98.8M198.2 95.9Q206.1 97.9 214.4 98.8M157.2 98.8Q149.6 97.2 141.9 96.5M135.5 87.5Q134.6 92.0 141.9 96.5M141.9 96.5Q131.3 98.6 120.3 101.0M119.9 101.4Q120.0 101.2 120.3 101.0M50.4 99.1Q63.3 101.4 78.2 99.5M78.2 99.5Q81.2 95.3 86.8 92.0M89.3 91.9Q101.4 94.6 114.3 97.4M120.3 101.0Q116.1 99.5 114.3 97.4M86.8 92.0Q88.0 91.8 89.3 91.9" stroke="#13200a" stroke-width="2.00" stroke-opacity="0.80" fill="none"/>
<path d="M-4.2 100.7Q-16.7 112.3 -20.7 125.8M32.7 103.8Q31.3 107.5 27.0 111.5M32.7 103.8Q29.3 103.4 27.3 102.4M73.7 115.5Q55.7 108.5 50.4 99.1M167.4 114.9Q165.1 111.3 161.1 108.0M161.1 108.0Q145.0 109.7 130.1 113.4M157.2 98.8Q157.3 103.1 161.1 108.0M182.6 98.8Q191.2 107.0 199.7 117.0M223.7 113.1Q224.5 106.1 214.4 98.8M182.6 98.8Q199.1 107.2 223.7 113.1M130.1 113.4Q125.1 107.0 119.9 101.4M81.4 115.2Q83.1 111.1 88.3 108.0M119.9 101.4Q103.9 103.9 88.3 108.0M78.2 99.5Q84.4 103.2 88.3 108.0" stroke="#13200a" stroke-width="2.25" stroke-opacity="0.80" fill="none"/>
<path d="M27.0 111.5Q33.3 113.3 35.8 116.9M35.8 116.9Q55.0 114.0 72.7 115.6M72.7 115.6Q73.2 115.6 73.7 115.5M73.7 115.5Q77.6 115.5 81.4 115.2M167.4 114.9Q184.3 117.7 199.7 117.0" stroke="#13200a" stroke-width="2.50" stroke-opacity="0.80" fill="none"/>
<path d="M27.0 111.5Q6.8 120.9 -19.7 125.9M94.6 128.8Q92.0 120.2 81.4 115.2M134.8 122.9Q129.4 118.1 130.1 113.4M167.4 114.9Q160.0 118.6 159.2 125.2M210.2 130.3Q208.3 124.4 203.3 118.7M199.7 117.0Q201.4 117.9 203.3 118.7M203.3 118.7Q213.6 115.9 228.8 117.1" stroke="#13200a" stroke-width="2.50" stroke-opacity="1.00" fill="none"/>
<path d="M35.8 116.9Q39.9 125.2 30.9 136.4M72.7 115.6Q52.5 123.9 40.2 138.7M67.2 137.0Q80.6 136.7 92.5 132.7M92.5 132.7Q94.6 130.9 94.6 128.8M94.6 128.8Q115.9 126.9 134.8 122.9M151.0 128.6Q142.4 126.0 134.8 122.9M216.6 135.2Q214.6 132.5 210.2 130.3M151.0 128.6Q154.8 126.6 159.2 125.2M159.2 125.2Q185.8 132.0 210.2 130.3" stroke="#13200a" stroke-width="2.75" stroke-opacity="1.00" fill="none"/>
<path d="M-18.2 138.9Q5.1 140.1 30.9 136.4M30.9 136.4Q34.0 137.6 34.8 140.0M33.4 143.0Q34.4 141.5 34.8 140.0M34.8 140.0Q37.6 139.7 40.2 138.7M67.2 137.0Q53.3 140.6 40.2 138.7M97.4 150.3Q91.2 141.4 92.5 132.7M194.0 149.1Q200.5 138.7 216.6 135.2M216.6 135.2Q228.4 138.8 240.6 143.6M163.0 146.3Q160.3 136.5 151.0 128.6" stroke="#13200a" stroke-width="3.00" stroke-opacity="1.00" fill="none"/>
<path d="M57.0 159.4Q66.6 147.7 67.2 137.0" stroke="#13200a" stroke-width="3.25" stroke-opacity="1.00" fill="none"/>

<rect width="218" height="137" fill="url(#shd)"/>
<rect width="218" height="137" fill="url(#shv)"/>
<ellipse cx="51.5" cy="93.0" rx="8.5" ry="4.8" fill="#0c1408" opacity=".6"/><ellipse cx="95.0" cy="84.0" rx="5.7" ry="4.2" fill="#0c1408" opacity=".6"/><ellipse cx="107.5" cy="79.5" rx="6.7" ry="4.1" fill="#0c1408" opacity=".6"/><ellipse cx="108.5" cy="91.5" rx="4.5" ry="5.0" fill="#0c1408" opacity=".6"/><ellipse cx="94.0" cy="105.0" rx="4.3" ry="6.7" fill="#0c1408" opacity=".6"/><ellipse cx="101.5" cy="98.5" rx="5.3" ry="4.0" fill="#0c1408" opacity=".6"/><ellipse cx="130.5" cy="81.8" rx="7.5" ry="4.8" fill="#0c1408" opacity=".6"/><ellipse cx="140.0" cy="78.2" rx="6.3" ry="4.4" fill="#0c1408" opacity=".6"/><ellipse cx="156.5" cy="86.5" rx="7.1" ry="4.8" fill="#0c1408" opacity=".6"/><ellipse cx="164.5" cy="90.5" rx="5.3" ry="4.2" fill="#0c1408" opacity=".6"/><ellipse cx="157.5" cy="99.2" rx="6.1" ry="4.0" fill="#0c1408" opacity=".6"/><ellipse cx="125.0" cy="110.0" rx="8.5" ry="5.2" fill="#0c1408" opacity=".6"/><ellipse cx="51.0" cy="91.5" rx="4.8" ry="2.1" transform="rotate(-15 51.0 91.5)" fill="#bfae7c"/><ellipse cx="94.5" cy="82.5" rx="2.6" ry="1.6" transform="rotate(-20 94.5 82.5)" fill="#bfae7c"/><ellipse cx="107.0" cy="78.0" rx="3.4" ry="1.5" transform="rotate(10 107.0 78.0)" fill="#bfae7c"/><ellipse cx="108.0" cy="90.0" rx="1.6" ry="2.2" transform="rotate(0 108.0 90.0)" fill="#bfae7c"/><ellipse cx="93.5" cy="103.5" rx="1.4" ry="3.6" transform="rotate(10 93.5 103.5)" fill="#bfae7c"/><ellipse cx="101.0" cy="97.0" rx="2.2" ry="1.4" transform="rotate(-20 101.0 97.0)" fill="#bfae7c"/><ellipse cx="130.0" cy="80.3" rx="4.0" ry="2.1" transform="rotate(5 130.0 80.3)" fill="#bfae7c"/><ellipse cx="139.5" cy="76.7" rx="3.0" ry="1.8" transform="rotate(-15 139.5 76.7)" fill="#bfae7c"/><ellipse cx="156.0" cy="85.0" rx="3.7" ry="2.1" transform="rotate(-20 156.0 85.0)" fill="#bfae7c"/><ellipse cx="164.0" cy="89.0" rx="2.2" ry="1.6" transform="rotate(10 164.0 89.0)" fill="#bfae7c"/><ellipse cx="157.0" cy="97.7" rx="2.9" ry="1.4" transform="rotate(0 157.0 97.7)" fill="#bfae7c"/><ellipse cx="124.5" cy="108.5" rx="4.8" ry="2.4" transform="rotate(-30 124.5 108.5)" fill="#bfae7c"/>
</svg><!--IMGEND-->
<div class="a" style="left:0;top:472px;width:227px;height:27px;background:#d7d7d7;border-top:1px solid #d2d2d2"></div>
<div class="a" style="left:11px;top:481.5px;font-size:10px;line-height:12px;color:#222;white-space:nowrap;font-weight:bold;letter-spacing:-0.1px">选择的距离：4324px</div>
<svg class="a" style="left:220px;top:492px" width="8" height="8"><path d="M7 0 V7 H0 Z" fill="#6a6a6a"/></svg>
</div>
<div class="a" id="sb" style="left:527px;top:55px;width:184px;height:600px;background:#48484a;border-left:1px solid #2c2c2c">
<div class="a" style="left:0;top:0;width:183px;height:23px;background:#393939"></div>
<div class="a shd" style="left:10px;top:6px">参数</div>
<div class="sl" style="top:29.0px">扫描范围</div><div class="sv" style="top:28.0px">自定义</div><div class="sl" style="top:48.5px">X轴</div><div class="sv" style="top:47.5px">97</div><div class="sl" style="top:68.0px">Y轴</div><div class="sv" style="top:67.0px">63</div><div class="sl" style="top:87.5px">高度</div><div class="sv" style="top:86.5px">14470</div><div class="sl" style="top:107.0px">宽度</div><div class="sv" style="top:106.0px">4324</div><div class="sl" style="top:126.5px">单位</div><div class="sv" style="top:125.5px">pixel</div><div class="sl" style="top:146.0px">点座标</div><div class="sv" style="top:145.0px">234,432</div><div class="sl" style="top:165.5px">RGB</div><div class="sv" style="top:164.5px">233,20,44</div><div class="sl" style="top:185.0px">Lab</div><div class="sv" style="top:184.0px">0,3,9</div><div class="sl" style="top:204.5px">分辨率</div><div class="sv" style="top:203.5px">300</div><div class="sl" style="top:224.0px">储存位置</div><div class="sv" style="top:223.0px">桌面</div>
<div class="a" style="left:139.5px;top:200px;width:23px;height:38.5px;background:#3d3d3f"></div>
<svg class="a" style="left:146.5px;top:208px" width="9" height="6"><path d="M0 0 H9 L4.5 5.5 Z" fill="#f0f0f0"/></svg>
<div class="a" style="left:146px;top:228px;width:2px;height:2px;background:#eee;box-shadow:4px 0 #eee,8px 0 #eee"></div>
<div class="a" style="left:0;top:246px;width:183px;height:22px;background:#383838"></div>
<div class="a shd" style="left:10px;top:251px">直方图</div>
<svg class="a" style="left:167px;top:253px" width="11" height="7"><path d="M0 0 H11 L5.5 6.5 Z" fill="#f0f0f0"/></svg>
<div class="a" style="left:6px;top:268px;width:173px;height:250px;border:1px solid #404042;border-top:none"></div>
<div class="a" style="left:6px;top:443.5px;width:173px;height:1px;background:#3f3f41"></div>
<div class="a" style="left:6px;top:330px;width:173px;height:1px;background:#3f3f41"></div>
<div class="a" style="left:6px;top:388px;width:173px;height:1px;background:#3f3f41"></div>
<div class="a hl" style="left:11px;top:276.5px">红</div>
<svg class="a" style="left:34px;top:273.6px" width="120" height="48" viewBox="0 0 120 48">
<path d="M1 45.2 Q30 44.2 60 43 Q75 41.8 90 43 Q105 43.6 114 44.6 L114 45.2 Z" fill="#e01820" stroke="#e01820" stroke-width="1" stroke-linejoin="round"/>
<path d="M1 45.2 H114.5 V7" fill="none" stroke="#e01820" stroke-width="2"/>
</svg>
<div class="a hl" style="left:11px;top:336px">绿</div>
<svg class="a" style="left:34px;top:334.1px" width="120" height="48" viewBox="0 0 120 48">
<path d="M1 45.2 Q30 44.2 60 43 Q75 41.8 90 43 Q105 43.6 114 44.6 L114 45.2 Z" fill="#22dd22" stroke="#22dd22" stroke-width="1" stroke-linejoin="round"/>
<path d="M1 45.2 H114.5 V7" fill="none" stroke="#22dd22" stroke-width="2"/>
</svg>
<div class="a hl" style="left:11px;top:395.5px">蓝</div>
<svg class="a" style="left:34px;top:391.3px" width="120" height="48" viewBox="0 0 120 48">
<path d="M1 45.2 Q30 44.2 60 43 Q75 41.8 90 43 Q105 43.6 114 44.6 L114 45.2 Z" fill="#2f62ee" stroke="#2f62ee" stroke-width="1" stroke-linejoin="round"/>
<path d="M1 45.2 H114.5 V7" fill="none" stroke="#2f62ee" stroke-width="2"/>
</svg>
<div class="a bb" style="left:5px;top:526px;width:173px;height:31px"><svg class="a" style="left:36px;top:7px" width="25" height="16" viewBox="0 0 25 16"><path d="M1.8 8 Q12.5 -3.2 23.2 8 Q12.5 19.2 1.8 8 Z" fill="none" stroke="#eee" stroke-width="2.4" stroke-linejoin="round"/><circle cx="12.5" cy="8" r="3.6" fill="#eee"/></svg><span style="left:71px;top:7px;font-size:14.5px">预扫描</span></div>
<div class="a bb" style="left:5px;top:561px;width:85.5px;height:32px"><span style="left:14px;top:8px;font-size:14.5px">智能扫描</span></div>
<div class="a bb" style="left:93px;top:561px;width:85px;height:32px"><span style="left:11px;top:8px;font-size:14.5px">个性扫描</span></div>
</div>
</body></html>
